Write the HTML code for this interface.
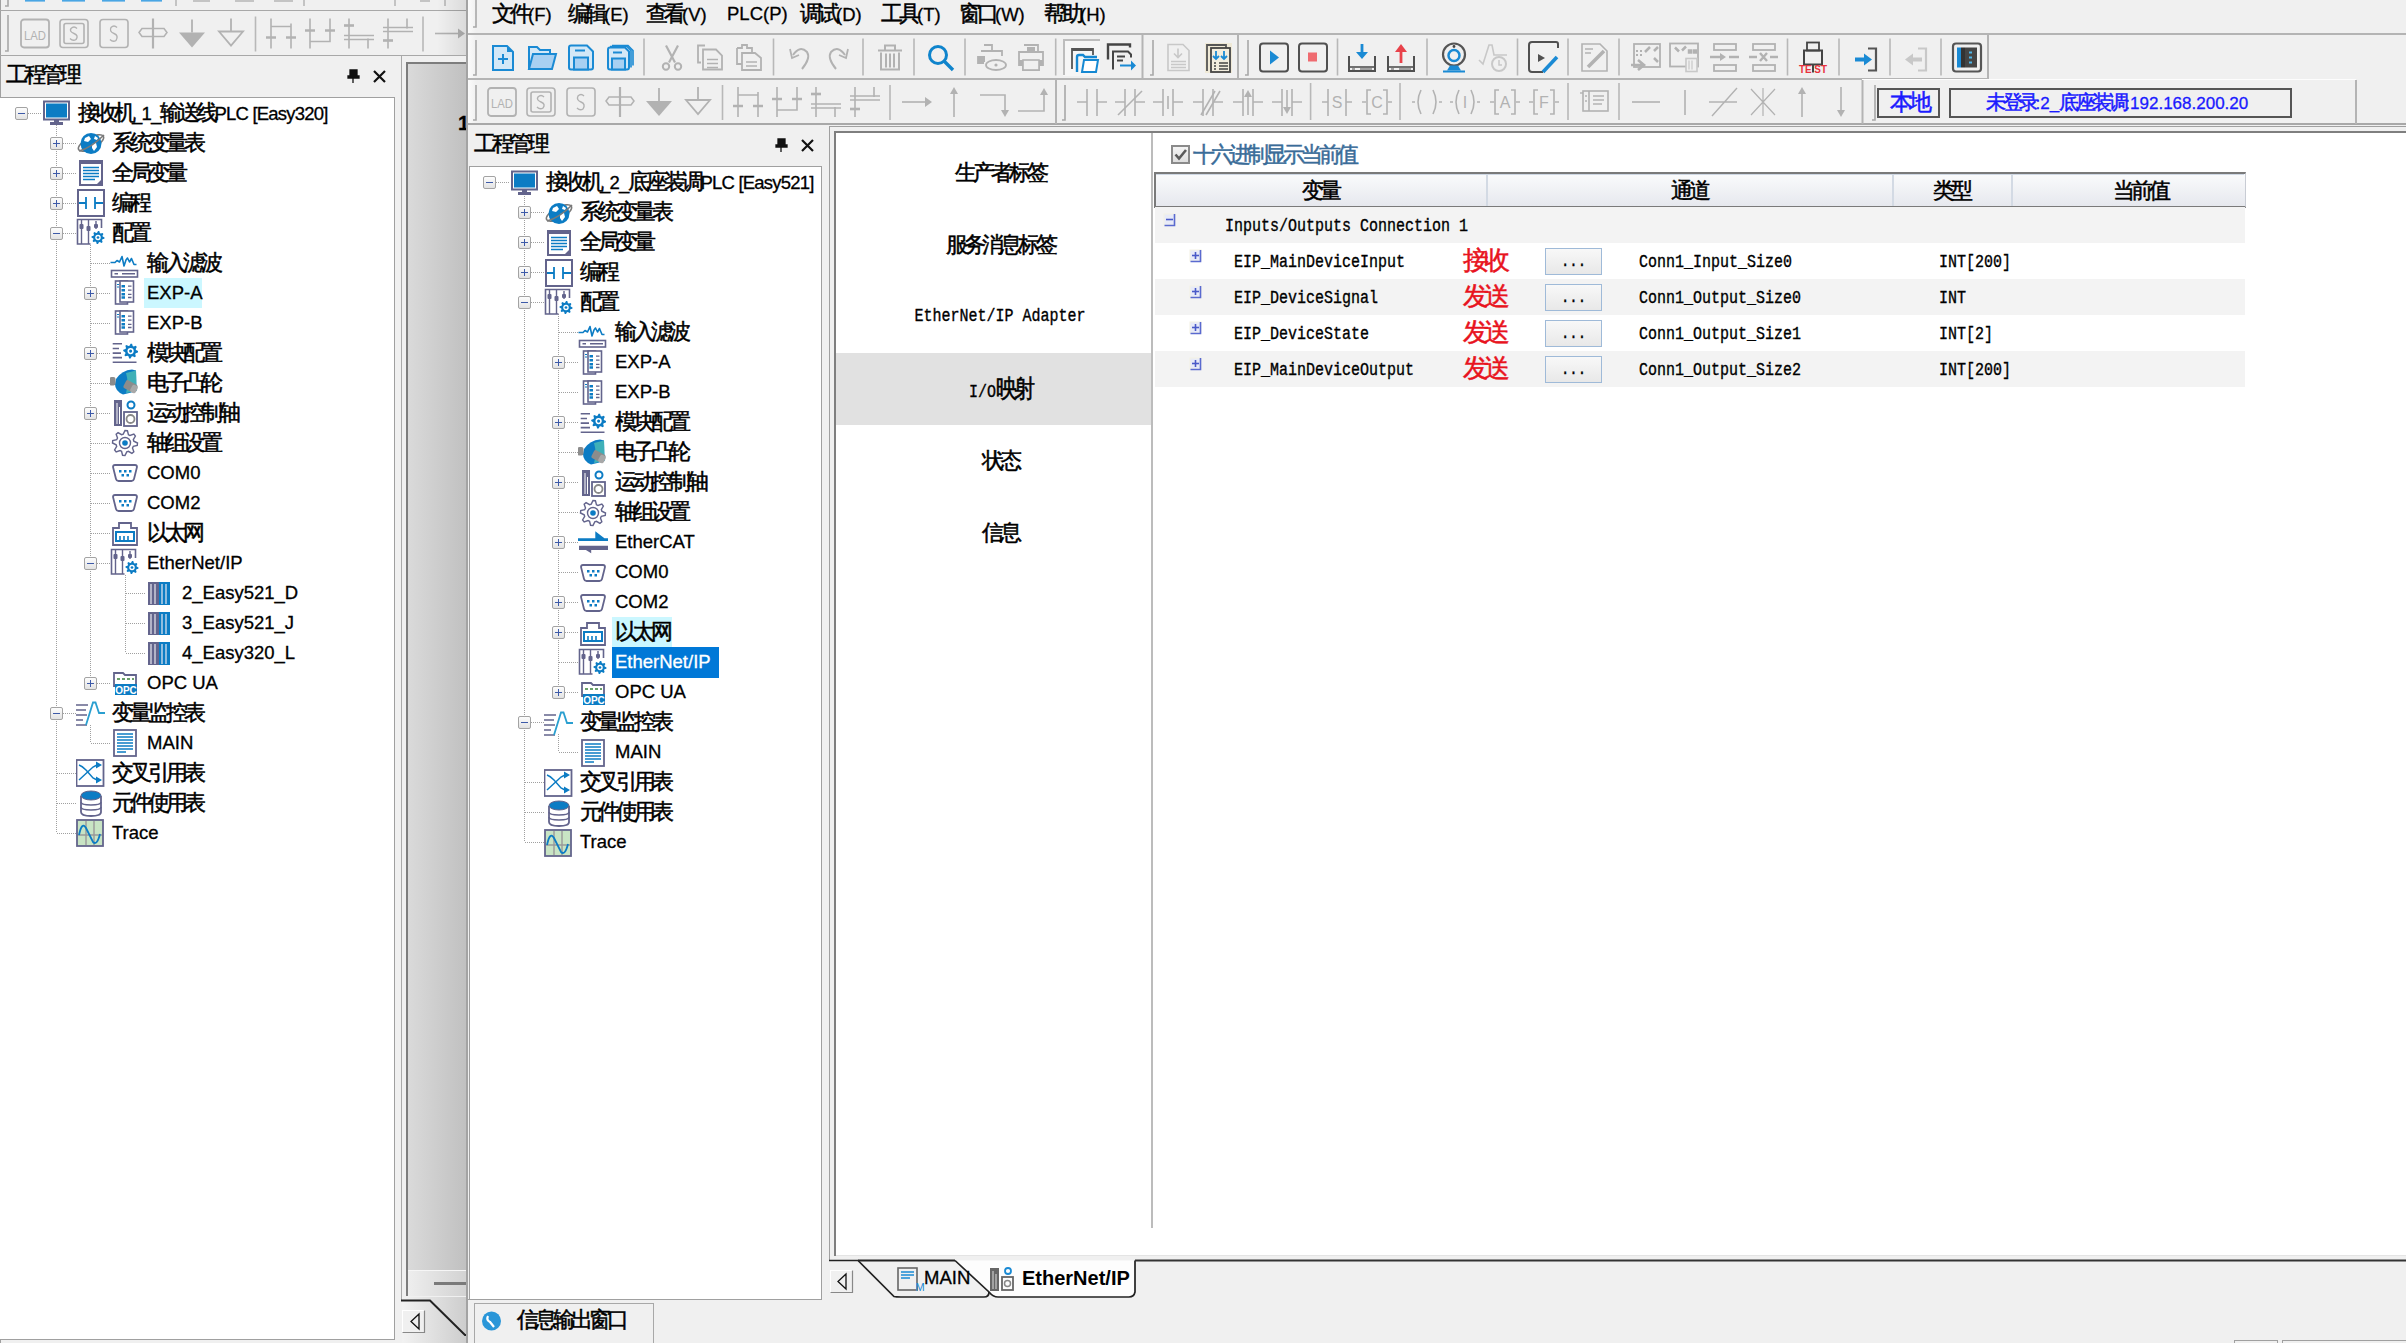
<!DOCTYPE html><html><head><meta charset="utf-8"><style>
*{box-sizing:border-box}
html,body{margin:0;padding:0}
body{width:2406px;height:1343px;overflow:hidden;background:#f0f0f0;position:relative;font-family:"Liberation Sans",sans-serif;color:#000}
.a{position:absolute}
.t{white-space:nowrap;font-size:18.5px;-webkit-text-stroke:0.3px currentColor}
.c{display:inline-block;width:0.973em;text-align:center;white-space:nowrap}
.c i{font-style:normal;font-size:1.2em;-webkit-text-stroke:0.5px currentColor}
.m{font-family:"Liberation Mono",monospace}
</style></head><body><div class="a" style="left:0px;top:0px;width:1px;height:1343px;background:#a0a0a0"></div>
<div class="a" style="left:0px;top:10px;width:467px;height:1px;background:#a8a8a8"></div>
<div class="a" style="left:0px;top:55px;width:467px;height:1px;background:#a8a8a8"></div>
<svg class="a" style="left:0;top:0" width="467" height="60"><path d="M8 15 V51 H5" fill="none" stroke="#a8a8a8" stroke-width="1.6"/><g transform="translate(20,18.5)"><rect x="1" y="1" width="28" height="28" rx="3" fill="none" stroke="#b2b2b2" stroke-width="1.8"/><text x="15" y="21" font-size="12" font-family="Liberation Sans" fill="#b2b2b2" text-anchor="middle" textLength="22" lengthAdjust="spacingAndGlyphs">LAD</text></g><g transform="translate(59,18.5)"><rect x="1" y="1" width="28" height="28" rx="3" fill="none" stroke="#b2b2b2" stroke-width="1.6"/><rect x="5" y="5" width="20" height="20" rx="2" fill="none" stroke="#b2b2b2" stroke-width="1.6"/><path d="M18 10 Q15 7 12 10 Q10 13 15 15 Q20 17 17 21 Q14 23 11 20" fill="none" stroke="#b2b2b2" stroke-width="1.4"/></g><g transform="translate(99,18.5)"><rect x="1" y="1" width="28" height="28" rx="3" fill="none" stroke="#b2b2b2" stroke-width="1.6"/><path d="M18 9 Q15 6 12 9 Q10 13 15 15 Q20 17 17 22 Q14 24 11 21" fill="none" stroke="#b2b2b2" stroke-width="1.4"/></g><g transform="translate(138,18.5)"><path d="M15 0V30" stroke="#b2b2b2" stroke-width="2.2"/><path d="M1 14 L4 10 H26 L29 14 L26 18 H4Z" fill="none" stroke="#b2b2b2" stroke-width="1.5"/></g><g transform="translate(178,18.5)"><path d="M14 1V14" stroke="#b2b2b2" stroke-width="1.8"/><path d="M1 14H27L14 29Z" fill="#b2b2b2"/></g><g transform="translate(217,18.5)"><path d="M14 0V13" stroke="#b2b2b2" stroke-width="1.8"/><path d="M2 13H26L14 27Z" fill="none" stroke="#b2b2b2" stroke-width="1.8"/></g><g transform="translate(266,18.5)"><path d="M5 0V30M25 5V30M5 8H25V30" fill="none" stroke="#b2b2b2" stroke-width="1.6"/><path d="M0 19H10M20 19H30" stroke="#b2b2b2" stroke-width="2.6"/></g><g transform="translate(305,18.5)"><path d="M5 0V30M25 0V23H5" fill="none" stroke="#b2b2b2" stroke-width="1.6"/><path d="M0 12H10M20 12H30" stroke="#b2b2b2" stroke-width="2.6"/></g><g transform="translate(344,18.5)"><path d="M5 0V30M24 20V30" fill="none" stroke="#b2b2b2" stroke-width="1.6"/><path d="M0 17H30M0 21H30" stroke="#b2b2b2" stroke-width="1.4"/><path d="M0 7H10" stroke="#b2b2b2" stroke-width="2.6"/></g><g transform="translate(383,18.5)"><path d="M5 0V30M24 0V10" fill="none" stroke="#b2b2b2" stroke-width="1.6"/><path d="M0 9H30M0 13H30" stroke="#b2b2b2" stroke-width="1.4"/><path d="M0 22H10" stroke="#b2b2b2" stroke-width="2.6"/></g><g transform="translate(435,18.5)"><path d="M0 15H27" stroke="#b2b2b2" stroke-width="1.6"/><path d="M23 10L30 15L23 20Z" fill="#b2b2b2"/></g><line x1="255.5" y1="16.5" x2="255.5" y2="51.5" stroke="#b8b8b8" stroke-width="1.6"/><line x1="423" y1="16.5" x2="423" y2="51.5" stroke="#b8b8b8" stroke-width="1.6"/><rect x="25" y="0" width="20" height="1.6" fill="#4aa6e4"/><rect x="62" y="0" width="23" height="1.6" fill="#4aa6e4"/><rect x="102" y="0" width="23" height="1.6" fill="#4aa6e4"/><rect x="141" y="0" width="21" height="1.6" fill="#4aa6e4"/><path d="M8 -4 V6 H5" fill="none" stroke="#a8a8a8" stroke-width="1.6"/><line x1="176" y1="0" x2="176" y2="6" stroke="#b8b8b8" stroke-width="1.6"/><line x1="304" y1="0" x2="304" y2="6" stroke="#b8b8b8" stroke-width="1.6"/><line x1="395" y1="0" x2="395" y2="6" stroke="#b8b8b8" stroke-width="1.6"/><line x1="445" y1="0" x2="445" y2="6" stroke="#b8b8b8" stroke-width="1.6"/><rect x="193" y="0" width="17" height="2" fill="#c4c4c4"/><rect x="235" y="0" width="19" height="2" fill="#c4c4c4"/><rect x="274" y="0" width="19" height="2" fill="#c4c4c4"/><rect x="420" y="0" width="10" height="2" fill="#c4c4c4"/></svg>
<div class="a" style="left:437px;top:0px;width:30px;height:55px;background:linear-gradient(to right,rgba(0,0,0,0),rgba(0,0,0,0.09))"></div>
<div class="a t" style="left:6px;top:56px;height:38px;line-height:38px;"><span class="c"><i>工</i></span><span class="c"><i>程</i></span><span class="c"><i>管</i></span><span class="c"><i>理</i></span></div>
<svg class="a" style="left:346px;top:67px" width="40" height="18" viewBox="0 0 40 18"><path d="M4 3H11V9H13V11H2V9H4Z M7 11V16" fill="#111" stroke="#111" stroke-width="1.3"/><path d="M28 4L39 15M39 4L28 15" stroke="#111" stroke-width="2.2"/></svg>
<div class="a" style="left:0px;top:97px;width:395px;height:1243px;background:#fff;border:1px solid #a0a0a0;border-left:none"></div>
<div class="a" style="left:56px;top:125px;width:1px;height:708px;background:repeating-linear-gradient(to bottom,#a0a0a0 0 1px,transparent 1px 2px)"></div>
<div class="a" style="left:90px;top:245px;width:1px;height:438px;background:repeating-linear-gradient(to bottom,#a0a0a0 0 1px,transparent 1px 2px)"></div>
<div class="a" style="left:125px;top:575px;width:1px;height:78px;background:repeating-linear-gradient(to bottom,#a0a0a0 0 1px,transparent 1px 2px)"></div>
<div class="a" style="left:90px;top:725px;width:1px;height:18px;background:repeating-linear-gradient(to bottom,#a0a0a0 0 1px,transparent 1px 2px)"></div>
<div class="a" style="left:22px;top:113px;width:19px;height:1px;background:repeating-linear-gradient(to right,#a0a0a0 0 1px,transparent 1px 2px)"></div>
<div class="a" style="left:15px;top:107px;width:13px;height:13px;border:1px solid #a3a3a3;border-radius:2px;background:linear-gradient(#fdfdfd,#e2e2e2)"></div>
<div class="a" style="left:18px;top:113px;width:7px;height:1.3px;background:#3d5aa8"></div>
<svg class="a" style="left:41px;top:98px;" width="30" height="30" viewBox="0 0 30 30"><rect x="3" y="3.5" width="25" height="18" fill="#fff" stroke="#63648c" stroke-width="2"/><rect x="5" y="5.5" width="21" height="14" fill="#0c7cc4"/><rect x="13" y="22" width="5" height="2.5" fill="#63648c"/><rect x="9" y="24" width="13" height="3" fill="#63648c"/></svg>
<div class="a t" style="left:78px;top:98px;height:30px;line-height:30px;letter-spacing:-0.8px"><span class="c"><i>接</i></span><span class="c"><i>收</i></span><span class="c"><i>机</i></span>_1_<span class="c"><i>输</i></span><span class="c"><i>送</i></span><span class="c"><i>线</i></span>PLC [Easy320]</div>
<div class="a" style="left:57px;top:143px;width:19px;height:1px;background:repeating-linear-gradient(to right,#a0a0a0 0 1px,transparent 1px 2px)"></div>
<div class="a" style="left:50px;top:137px;width:13px;height:13px;border:1px solid #a3a3a3;border-radius:2px;background:linear-gradient(#fdfdfd,#e2e2e2)"></div>
<div class="a" style="left:53px;top:143px;width:7px;height:1.3px;background:#3d5aa8"></div>
<div class="a" style="left:56px;top:140px;width:1.3px;height:7px;background:#3d5aa8"></div>
<svg class="a" style="left:76px;top:128px;" width="30" height="30" viewBox="0 0 30 30"><ellipse cx="15" cy="15" rx="14" ry="5.5" fill="none" stroke="#7a7a7a" stroke-width="1.6" transform="rotate(-28 15 15)"/><circle cx="15" cy="15.5" r="10.5" fill="#0c7cc4"/><path d="M9 10 L13 8 L15 11 L12 14 L8 13Z M16 16 L20 15 L21 19 L18 23 L16 20Z M19 8 L22 10 L21 12 L18 11Z" fill="#fff"/><path d="M3 23 Q15 20 28 7" fill="none" stroke="#7a7a7a" stroke-width="1.6"/></svg>
<div class="a t" style="left:112px;top:128px;height:30px;line-height:30px;"><span class="c"><i>系</i></span><span class="c"><i>统</i></span><span class="c"><i>变</i></span><span class="c"><i>量</i></span><span class="c"><i>表</i></span></div>
<div class="a" style="left:57px;top:173px;width:19px;height:1px;background:repeating-linear-gradient(to right,#a0a0a0 0 1px,transparent 1px 2px)"></div>
<div class="a" style="left:50px;top:167px;width:13px;height:13px;border:1px solid #a3a3a3;border-radius:2px;background:linear-gradient(#fdfdfd,#e2e2e2)"></div>
<div class="a" style="left:53px;top:173px;width:7px;height:1.3px;background:#3d5aa8"></div>
<div class="a" style="left:56px;top:170px;width:1.3px;height:7px;background:#3d5aa8"></div>
<svg class="a" style="left:76px;top:158px;" width="30" height="30" viewBox="0 0 30 30"><rect x="4" y="3" width="22" height="24" fill="#fff" stroke="#63648c" stroke-width="2"/><rect x="4" y="3" width="22" height="3" fill="#63648c"/><path d="M7 9.5H23M7 12.5H23M7 15.5H23M7 18.5H23M7 21.5H19" stroke="#0c7cc4" stroke-width="1.6"/><path d="M21 26 L26 21 L26 26Z" fill="#63648c"/></svg>
<div class="a t" style="left:112px;top:158px;height:30px;line-height:30px;"><span class="c"><i>全</i></span><span class="c"><i>局</i></span><span class="c"><i>变</i></span><span class="c"><i>量</i></span></div>
<div class="a" style="left:57px;top:203px;width:19px;height:1px;background:repeating-linear-gradient(to right,#a0a0a0 0 1px,transparent 1px 2px)"></div>
<div class="a" style="left:50px;top:197px;width:13px;height:13px;border:1px solid #a3a3a3;border-radius:2px;background:linear-gradient(#fdfdfd,#e2e2e2)"></div>
<div class="a" style="left:53px;top:203px;width:7px;height:1.3px;background:#3d5aa8"></div>
<div class="a" style="left:56px;top:200px;width:1.3px;height:7px;background:#3d5aa8"></div>
<svg class="a" style="left:76px;top:188px;" width="30" height="30" viewBox="0 0 30 30"><rect x="2" y="2" width="26" height="26" fill="#fff" stroke="#63648c" stroke-width="2"/><path d="M3 15H10M10 9V21M19 9V21M19 15H27" stroke="#0c7cc4" stroke-width="1.8" fill="none"/></svg>
<div class="a t" style="left:112px;top:188px;height:30px;line-height:30px;"><span class="c"><i>编</i></span><span class="c"><i>程</i></span></div>
<div class="a" style="left:57px;top:233px;width:19px;height:1px;background:repeating-linear-gradient(to right,#a0a0a0 0 1px,transparent 1px 2px)"></div>
<div class="a" style="left:50px;top:227px;width:13px;height:13px;border:1px solid #a3a3a3;border-radius:2px;background:linear-gradient(#fdfdfd,#e2e2e2)"></div>
<div class="a" style="left:53px;top:233px;width:7px;height:1.3px;background:#3d5aa8"></div>
<svg class="a" style="left:76px;top:218px;" width="30" height="30" viewBox="0 0 30 30"><path d="M14.5 26H1.5V1.5H25.5V10" fill="none" stroke="#63648c" stroke-width="1.6"/><path d="M5.5 2V26M12.5 2V26M20 3V11" stroke="#63648c" stroke-width="1.4"/><rect x="3.5" y="6" width="4" height="5" rx="1" fill="#63648c"/><rect x="10.5" y="8" width="4" height="5" rx="1" fill="#63648c"/><rect x="18" y="6" width="4" height="4" rx="1" fill="#63648c"/><path d="M28.51,19.50 L28.38,20.77 L26.46,21.35 L26.02,22.18 L26.60,24.10 L25.62,24.91 L23.85,23.96 L22.94,24.24 L22.00,26.01 L20.73,25.88 L20.15,23.96 L19.32,23.52 L17.40,24.10 L16.59,23.12 L17.54,21.35 L17.26,20.44 L15.49,19.50 L15.62,18.23 L17.54,17.65 L17.98,16.82 L17.40,14.90 L18.38,14.09 L20.15,15.04 L21.06,14.76 L22.00,12.99 L23.27,13.12 L23.85,15.04 L24.68,15.48 L26.60,14.90 L27.41,15.88 L26.46,17.65 L26.74,18.56Z" fill="#0c7cc4"/><circle cx="22" cy="19.5" r="2.7300000000000004" fill="#fff"/><circle cx="22" cy="19.5" r="1.3650000000000002" fill="#0c7cc4"/></svg>
<div class="a t" style="left:112px;top:218px;height:30px;line-height:30px;"><span class="c"><i>配</i></span><span class="c"><i>置</i></span></div>
<div class="a" style="left:91px;top:263px;width:19px;height:1px;background:repeating-linear-gradient(to right,#a0a0a0 0 1px,transparent 1px 2px)"></div>
<svg class="a" style="left:110px;top:248px;" width="30" height="30" viewBox="0 0 30 30"><polyline points="0.5,14.5 5,14.5 7,12.5 9.5,14 12,8.5 14,18 16,12 17.5,10 19.5,14 21.5,10.5 24,16.5 26.5,16.5" fill="none" stroke="#0c7cc4" stroke-width="1.6" stroke-linejoin="round"/><rect x="1.5" y="22.5" width="26" height="6.5" fill="#fff" stroke="#63648c" stroke-width="1.6"/><path d="M4.5 25.75H8M12 25.75H25" stroke="#63648c" stroke-width="1.4"/></svg>
<div class="a t" style="left:147px;top:248px;height:30px;line-height:30px;"><span class="c"><i>输</i></span><span class="c"><i>入</i></span><span class="c"><i>滤</i></span><span class="c"><i>波</i></span></div>
<div class="a" style="left:91px;top:293px;width:19px;height:1px;background:repeating-linear-gradient(to right,#a0a0a0 0 1px,transparent 1px 2px)"></div>
<div class="a" style="left:84px;top:287px;width:13px;height:13px;border:1px solid #a3a3a3;border-radius:2px;background:linear-gradient(#fdfdfd,#e2e2e2)"></div>
<div class="a" style="left:87px;top:293px;width:7px;height:1.3px;background:#3d5aa8"></div>
<div class="a" style="left:90px;top:290px;width:1.3px;height:7px;background:#3d5aa8"></div>
<svg class="a" style="left:110px;top:278px;" width="30" height="30" viewBox="0 0 30 30"><rect x="5.5" y="3" width="12" height="23" fill="#fff" stroke="#63648c" stroke-width="1.6"/><rect x="10" y="3" width="13.5" height="21" fill="#fff" stroke="#63648c" stroke-width="1.6"/><path d="M11.5 8.2H15M11.5 12.2H15M11.5 16.3H15M11.5 19.5H15" stroke="#0c7cc4" stroke-width="2.4"/><path d="M18 8.2H21.5M18 12.2H21.5M18 16.3H21.5M18 19.5H21.5" stroke="#63648c" stroke-width="1.3"/><path d="M7 6.5H9M7 9H9" stroke="#0c7cc4" stroke-width="1.2"/></svg>
<div class="a" style="left:144px;top:278px;width:58px;height:30px;background:#cbf7ff"></div>
<div class="a t" style="left:147px;top:278px;height:30px;line-height:30px;">EXP-A</div>
<div class="a" style="left:91px;top:323px;width:19px;height:1px;background:repeating-linear-gradient(to right,#a0a0a0 0 1px,transparent 1px 2px)"></div>
<svg class="a" style="left:110px;top:308px;" width="30" height="30" viewBox="0 0 30 30"><rect x="5.5" y="3" width="12" height="23" fill="#fff" stroke="#63648c" stroke-width="1.6"/><rect x="10" y="3" width="13.5" height="21" fill="#fff" stroke="#63648c" stroke-width="1.6"/><path d="M11.5 8.2H15M11.5 12.2H15M11.5 16.3H15M11.5 19.5H15" stroke="#0c7cc4" stroke-width="2.4"/><path d="M18 8.2H21.5M18 12.2H21.5M18 16.3H21.5M18 19.5H21.5" stroke="#63648c" stroke-width="1.3"/><path d="M7 6.5H9M7 9H9" stroke="#0c7cc4" stroke-width="1.2"/></svg>
<div class="a t" style="left:147px;top:308px;height:30px;line-height:30px;">EXP-B</div>
<div class="a" style="left:91px;top:353px;width:19px;height:1px;background:repeating-linear-gradient(to right,#a0a0a0 0 1px,transparent 1px 2px)"></div>
<div class="a" style="left:84px;top:347px;width:13px;height:13px;border:1px solid #a3a3a3;border-radius:2px;background:linear-gradient(#fdfdfd,#e2e2e2)"></div>
<div class="a" style="left:87px;top:353px;width:7px;height:1.3px;background:#3d5aa8"></div>
<div class="a" style="left:90px;top:350px;width:1.3px;height:7px;background:#3d5aa8"></div>
<svg class="a" style="left:110px;top:338px;" width="30" height="30" viewBox="0 0 30 30"><path d="M2.7 5.7H12M2.7 10.5H9M2.7 15.1H11M2.7 19.6H12M2.7 24.2H26.5" stroke="#63648c" stroke-width="1.6"/><path d="M28.04,13.10 L27.90,14.55 L25.70,15.21 L25.19,16.17 L25.86,18.36 L24.73,19.29 L22.71,18.20 L21.68,18.51 L20.60,20.54 L19.15,20.40 L18.49,18.20 L17.53,17.69 L15.34,18.36 L14.41,17.23 L15.50,15.21 L15.19,14.18 L13.16,13.10 L13.30,11.65 L15.50,10.99 L16.01,10.03 L15.34,7.84 L16.47,6.91 L18.49,8.00 L19.52,7.69 L20.60,5.66 L22.05,5.80 L22.71,8.00 L23.67,8.51 L25.86,7.84 L26.79,8.97 L25.70,10.99 L26.01,12.02Z" fill="#0c7cc4"/><circle cx="20.6" cy="13.1" r="3.12" fill="#fff"/><circle cx="20.6" cy="13.1" r="1.56" fill="#0c7cc4"/></svg>
<div class="a t" style="left:147px;top:338px;height:30px;line-height:30px;"><span class="c"><i>模</i></span><span class="c"><i>块</i></span><span class="c"><i>配</i></span><span class="c"><i>置</i></span></div>
<div class="a" style="left:91px;top:383px;width:19px;height:1px;background:repeating-linear-gradient(to right,#a0a0a0 0 1px,transparent 1px 2px)"></div>
<svg class="a" style="left:110px;top:368px;" width="30" height="30" viewBox="0 0 30 30"><path d="M6 11 Q12 2 22 1.5 L26 2.5 L26.5 23 Q19 25 13 26.5 Q5 23 5 16Z" fill="#0c7cc4"/><path d="M16 5 L26 2.5 L26.5 23 L16 25 Q19 15 16 5Z" fill="#3fb0b8"/><rect x="14" y="14" width="13" height="9" rx="2" fill="#8c8c8c" transform="rotate(28 20.5 18.5)"/><rect x="21" y="17" width="6" height="8" rx="2" fill="#a8a8a8" transform="rotate(28 24 21)"/><rect x="-0.5" y="9" width="6" height="8.5" rx="2" fill="#8c8c8c"/></svg>
<div class="a t" style="left:147px;top:368px;height:30px;line-height:30px;"><span class="c"><i>电</i></span><span class="c"><i>子</i></span><span class="c"><i>凸</i></span><span class="c"><i>轮</i></span></div>
<div class="a" style="left:91px;top:413px;width:19px;height:1px;background:repeating-linear-gradient(to right,#a0a0a0 0 1px,transparent 1px 2px)"></div>
<div class="a" style="left:84px;top:407px;width:13px;height:13px;border:1px solid #a3a3a3;border-radius:2px;background:linear-gradient(#fdfdfd,#e2e2e2)"></div>
<div class="a" style="left:87px;top:413px;width:7px;height:1.3px;background:#3d5aa8"></div>
<div class="a" style="left:90px;top:410px;width:1.3px;height:7px;background:#3d5aa8"></div>
<svg class="a" style="left:110px;top:398px;" width="30" height="30" viewBox="0 0 30 30"><rect x="4" y="2" width="8" height="26" fill="#63648c"/><path d="M7 5V26M9.5 9V26" stroke="#fff" stroke-width="1"/><circle cx="21" cy="7" r="3.5" fill="#fff" stroke="#0c7cc4" stroke-width="2"/><rect x="14" y="14" width="13" height="14" fill="#fff" stroke="#63648c" stroke-width="1.8"/><circle cx="20.5" cy="21" r="4" fill="none" stroke="#888" stroke-width="1.8"/></svg>
<div class="a t" style="left:147px;top:398px;height:30px;line-height:30px;"><span class="c"><i>运</i></span><span class="c"><i>动</i></span><span class="c"><i>控</i></span><span class="c"><i>制</i></span><span class="c"><i>轴</i></span></div>
<div class="a" style="left:91px;top:443px;width:19px;height:1px;background:repeating-linear-gradient(to right,#a0a0a0 0 1px,transparent 1px 2px)"></div>
<svg class="a" style="left:110px;top:428px;" width="30" height="30" viewBox="0 0 30 30"><path d="M27.50,15.00 L27.26,17.44 L23.31,18.44 L22.48,20.00 L23.84,23.84 L21.94,25.39 L18.44,23.31 L16.76,23.83 L15.00,27.50 L12.56,27.26 L11.56,23.31 L10.00,22.48 L6.16,23.84 L4.61,21.94 L6.69,18.44 L6.17,16.76 L2.50,15.00 L2.74,12.56 L6.69,11.56 L7.52,10.00 L6.16,6.16 L8.06,4.61 L11.56,6.69 L13.24,6.17 L15.00,2.50 L17.44,2.74 L18.44,6.69 L20.00,7.52 L23.84,6.16 L25.39,8.06 L23.31,11.56 L23.83,13.24Z" fill="#fff" stroke="#63648c" stroke-width="1.4"/><circle cx="15" cy="15" r="5.5" fill="#fff" stroke="#63648c" stroke-width="1.4"/><circle cx="15" cy="15" r="2.8" fill="#0c7cc4"/></svg>
<div class="a t" style="left:147px;top:428px;height:30px;line-height:30px;"><span class="c"><i>轴</i></span><span class="c"><i>组</i></span><span class="c"><i>设</i></span><span class="c"><i>置</i></span></div>
<div class="a" style="left:91px;top:473px;width:19px;height:1px;background:repeating-linear-gradient(to right,#a0a0a0 0 1px,transparent 1px 2px)"></div>
<svg class="a" style="left:110px;top:458px;" width="30" height="30" viewBox="0 0 30 30"><path d="M3 9 Q3 7 5 7 H25 Q27 7 27 9 L24 21 Q23.5 23 21.5 23 H8.5 Q6.5 23 6 21Z" fill="#fff" stroke="#63648c" stroke-width="1.8"/><path d="M9 12h2.5v2.5h-2.5zM14 12h2.5v2.5h-2.5zM19 12h2.5v2.5h-2.5zM11.5 16h2.5v2.5h-2.5zM16.5 16h2.5v2.5h-2.5z" fill="#0c7cc4"/></svg>
<div class="a t" style="left:147px;top:458px;height:30px;line-height:30px;">COM0</div>
<div class="a" style="left:91px;top:503px;width:19px;height:1px;background:repeating-linear-gradient(to right,#a0a0a0 0 1px,transparent 1px 2px)"></div>
<svg class="a" style="left:110px;top:488px;" width="30" height="30" viewBox="0 0 30 30"><path d="M3 9 Q3 7 5 7 H25 Q27 7 27 9 L24 21 Q23.5 23 21.5 23 H8.5 Q6.5 23 6 21Z" fill="#fff" stroke="#63648c" stroke-width="1.8"/><path d="M9 12h2.5v2.5h-2.5zM14 12h2.5v2.5h-2.5zM19 12h2.5v2.5h-2.5zM11.5 16h2.5v2.5h-2.5zM16.5 16h2.5v2.5h-2.5z" fill="#0c7cc4"/></svg>
<div class="a t" style="left:147px;top:488px;height:30px;line-height:30px;">COM2</div>
<div class="a" style="left:91px;top:533px;width:19px;height:1px;background:repeating-linear-gradient(to right,#a0a0a0 0 1px,transparent 1px 2px)"></div>
<svg class="a" style="left:110px;top:518px;" width="30" height="30" viewBox="0 0 30 30"><path d="M9 10V5H21V10H27V27H3V10Z" fill="#fff" stroke="#63648c" stroke-width="1.8"/><rect x="6" y="14" width="18" height="9" fill="none" stroke="#0c7cc4" stroke-width="2"/><path d="M10 18V23M14 18V23M18 18V23" stroke="#0c7cc4" stroke-width="1.6"/></svg>
<div class="a t" style="left:147px;top:518px;height:30px;line-height:30px;"><span class="c"><i>以</i></span><span class="c"><i>太</i></span><span class="c"><i>网</i></span></div>
<div class="a" style="left:91px;top:563px;width:19px;height:1px;background:repeating-linear-gradient(to right,#a0a0a0 0 1px,transparent 1px 2px)"></div>
<div class="a" style="left:84px;top:557px;width:13px;height:13px;border:1px solid #a3a3a3;border-radius:2px;background:linear-gradient(#fdfdfd,#e2e2e2)"></div>
<div class="a" style="left:87px;top:563px;width:7px;height:1.3px;background:#3d5aa8"></div>
<svg class="a" style="left:110px;top:548px;" width="30" height="30" viewBox="0 0 30 30"><path d="M14.5 26H1.5V1.5H25.5V10" fill="none" stroke="#63648c" stroke-width="1.6"/><path d="M5.5 2V26M12.5 2V26M20 3V11" stroke="#63648c" stroke-width="1.4"/><rect x="3.5" y="6" width="4" height="5" rx="1" fill="#63648c"/><rect x="10.5" y="8" width="4" height="5" rx="1" fill="#63648c"/><rect x="18" y="6" width="4" height="4" rx="1" fill="#63648c"/><path d="M28.51,19.50 L28.38,20.77 L26.46,21.35 L26.02,22.18 L26.60,24.10 L25.62,24.91 L23.85,23.96 L22.94,24.24 L22.00,26.01 L20.73,25.88 L20.15,23.96 L19.32,23.52 L17.40,24.10 L16.59,23.12 L17.54,21.35 L17.26,20.44 L15.49,19.50 L15.62,18.23 L17.54,17.65 L17.98,16.82 L17.40,14.90 L18.38,14.09 L20.15,15.04 L21.06,14.76 L22.00,12.99 L23.27,13.12 L23.85,15.04 L24.68,15.48 L26.60,14.90 L27.41,15.88 L26.46,17.65 L26.74,18.56Z" fill="#0c7cc4"/><circle cx="22" cy="19.5" r="2.7300000000000004" fill="#fff"/><circle cx="22" cy="19.5" r="1.3650000000000002" fill="#0c7cc4"/></svg>
<div class="a t" style="left:147px;top:548px;height:30px;line-height:30px;">EtherNet/IP</div>
<div class="a" style="left:126px;top:593px;width:19px;height:1px;background:repeating-linear-gradient(to right,#a0a0a0 0 1px,transparent 1px 2px)"></div>
<svg class="a" style="left:144px;top:578px;" width="30" height="30" viewBox="0 0 30 30"><rect x="4" y="4" width="22" height="23" fill="#63648c"/><rect x="15" y="4" width="11" height="23" fill="#0c7cc4"/><path d="M7 6V26M11 6V26M18 6V26M22 6V26" stroke="#e8e8f0" stroke-width="1.2"/></svg>
<div class="a t" style="left:182px;top:578px;height:30px;line-height:30px;">2_Easy521_D</div>
<div class="a" style="left:126px;top:623px;width:19px;height:1px;background:repeating-linear-gradient(to right,#a0a0a0 0 1px,transparent 1px 2px)"></div>
<svg class="a" style="left:144px;top:608px;" width="30" height="30" viewBox="0 0 30 30"><rect x="4" y="4" width="22" height="23" fill="#63648c"/><rect x="15" y="4" width="11" height="23" fill="#0c7cc4"/><path d="M7 6V26M11 6V26M18 6V26M22 6V26" stroke="#e8e8f0" stroke-width="1.2"/></svg>
<div class="a t" style="left:182px;top:608px;height:30px;line-height:30px;">3_Easy521_J</div>
<div class="a" style="left:126px;top:653px;width:19px;height:1px;background:repeating-linear-gradient(to right,#a0a0a0 0 1px,transparent 1px 2px)"></div>
<svg class="a" style="left:144px;top:638px;" width="30" height="30" viewBox="0 0 30 30"><rect x="4" y="4" width="22" height="23" fill="#63648c"/><rect x="15" y="4" width="11" height="23" fill="#0c7cc4"/><path d="M7 6V26M11 6V26M18 6V26M22 6V26" stroke="#e8e8f0" stroke-width="1.2"/></svg>
<div class="a t" style="left:182px;top:638px;height:30px;line-height:30px;">4_Easy320_L</div>
<div class="a" style="left:91px;top:683px;width:19px;height:1px;background:repeating-linear-gradient(to right,#a0a0a0 0 1px,transparent 1px 2px)"></div>
<div class="a" style="left:84px;top:677px;width:13px;height:13px;border:1px solid #a3a3a3;border-radius:2px;background:linear-gradient(#fdfdfd,#e2e2e2)"></div>
<div class="a" style="left:87px;top:683px;width:7px;height:1.3px;background:#3d5aa8"></div>
<div class="a" style="left:90px;top:680px;width:1.3px;height:7px;background:#3d5aa8"></div>
<svg class="a" style="left:110px;top:668px;" width="30" height="30" viewBox="0 0 30 30"><path d="M4 5H13L15 7H26V18H4Z" fill="#fff" stroke="#63648c" stroke-width="1.8"/><path d="M7 10h3v2h-3zM12 10h3v2h-3zM17 10h3v2h-3zM22 10h2v2h-2z" fill="#6aa06a"/><rect x="5" y="16" width="22" height="11" fill="#0c7cc4"/><text x="16" y="26" font-size="10" font-family="Liberation Sans" font-weight="bold" fill="#fff" text-anchor="middle">OPC</text></svg>
<div class="a t" style="left:147px;top:668px;height:30px;line-height:30px;">OPC UA</div>
<div class="a" style="left:57px;top:713px;width:19px;height:1px;background:repeating-linear-gradient(to right,#a0a0a0 0 1px,transparent 1px 2px)"></div>
<div class="a" style="left:50px;top:707px;width:13px;height:13px;border:1px solid #a3a3a3;border-radius:2px;background:linear-gradient(#fdfdfd,#e2e2e2)"></div>
<div class="a" style="left:53px;top:713px;width:7px;height:1.3px;background:#3d5aa8"></div>
<svg class="a" style="left:76px;top:698px;" width="30" height="30" viewBox="0 0 30 30"><path d="M0 7H12M0 12H10M0 17H11M0 22H7M0 27H11" stroke="#63648c" stroke-width="1.6"/><polyline points="10,27 17,4.5 19.5,4.5 23,15 29,15" fill="none" stroke="#2a9fd0" stroke-width="1.8"/></svg>
<div class="a t" style="left:112px;top:698px;height:30px;line-height:30px;"><span class="c"><i>变</i></span><span class="c"><i>量</i></span><span class="c"><i>监</i></span><span class="c"><i>控</i></span><span class="c"><i>表</i></span></div>
<div class="a" style="left:91px;top:743px;width:19px;height:1px;background:repeating-linear-gradient(to right,#a0a0a0 0 1px,transparent 1px 2px)"></div>
<svg class="a" style="left:110px;top:728px;" width="30" height="30" viewBox="0 0 30 30"><rect x="4" y="2" width="22" height="26" fill="#fff" stroke="#63648c" stroke-width="1.8"/><path d="M7 6H23M7 9H23M7 12H23M7 15H23M7 18H23M7 21H23M7 24H16" stroke="#0c7cc4" stroke-width="1.5"/></svg>
<div class="a t" style="left:147px;top:728px;height:30px;line-height:30px;">MAIN</div>
<div class="a" style="left:57px;top:773px;width:19px;height:1px;background:repeating-linear-gradient(to right,#a0a0a0 0 1px,transparent 1px 2px)"></div>
<svg class="a" style="left:76px;top:758px;" width="30" height="30" viewBox="0 0 30 30"><rect x="0.5" y="2" width="27" height="26" fill="#fff" stroke="#63648c" stroke-width="1.8"/><path d="M3 7 Q6 8 10 12 L17 20 L21 22M3 22 L17 9 L21 7" fill="none" stroke="#0c7cc4" stroke-width="1.5"/><path d="M20 3.5L26 7L20 10.5ZM20 18.5L26 22L20 25.5Z" fill="#0c7cc4"/></svg>
<div class="a t" style="left:112px;top:758px;height:30px;line-height:30px;"><span class="c"><i>交</i></span><span class="c"><i>叉</i></span><span class="c"><i>引</i></span><span class="c"><i>用</i></span><span class="c"><i>表</i></span></div>
<div class="a" style="left:57px;top:803px;width:19px;height:1px;background:repeating-linear-gradient(to right,#a0a0a0 0 1px,transparent 1px 2px)"></div>
<svg class="a" style="left:76px;top:788px;" width="30" height="30" viewBox="0 0 30 30"><path d="M5 8 V24 Q5 28 15 28 Q25 28 25 24 V8" fill="#fff" stroke="#63648c" stroke-width="1.8"/><path d="M5 14 Q5 17 15 17 Q25 17 25 14M5 19 Q5 22 15 22 Q25 22 25 19" fill="none" stroke="#63648c" stroke-width="1.6"/><ellipse cx="15" cy="7.5" rx="10" ry="4.5" fill="#0c7cc4" stroke="#63648c" stroke-width="1"/></svg>
<div class="a t" style="left:112px;top:788px;height:30px;line-height:30px;"><span class="c"><i>元</i></span><span class="c"><i>件</i></span><span class="c"><i>使</i></span><span class="c"><i>用</i></span><span class="c"><i>表</i></span></div>
<div class="a" style="left:57px;top:833px;width:19px;height:1px;background:repeating-linear-gradient(to right,#a0a0a0 0 1px,transparent 1px 2px)"></div>
<svg class="a" style="left:76px;top:818px;" width="30" height="30" viewBox="0 0 30 30"><rect x="1" y="2" width="26" height="26" fill="#c8e4c4" stroke="#63648c" stroke-width="1.8"/><path d="M2 17H26M10 3V27M18 3V27" stroke="#999" stroke-width="1.4"/><path d="M3 17 Q6 3 10 10 Q14 18 17 24 Q21 28 24 16" fill="none" stroke="#0c7cc4" stroke-width="1.8"/></svg>
<div class="a t" style="left:112px;top:818px;height:30px;line-height:30px;">Trace</div>
<div class="a" style="left:401px;top:56px;width:1px;height:1244px;background:#a9a9a9"></div>
<div class="a" style="left:406px;top:62px;width:61px;height:1234px;background:linear-gradient(to right,#dadada,#c0c0c0);border-left:2px solid #7d7d7d;border-top:2px solid #7d7d7d"></div>
<div class="a" style="left:408px;top:1270px;width:59px;height:26px;background:linear-gradient(to right,#eeeeee,#d2d2d2);border-top:1px solid #f6f6f6"></div>
<div class="a" style="left:434px;top:1282px;width:33px;height:3px;background:#7a7a7a"></div>
<div class="a t" style="left:458px;top:108px;height:30px;line-height:30px;font-size:20px;font-weight:bold">1</div>
<div class="a" style="left:402px;top:1297px;width:64px;height:46px;background:linear-gradient(to right,#f2f2f2,#cdcdcd)"></div>
<svg class="a" style="left:395px;top:1296px" width="72" height="47"><path d="M6 4.5H35L70 39H72" fill="none" stroke="#222" stroke-width="2"/><rect x="7.5" y="14.5" width="22" height="22" fill="#f0f0f0" stroke="#fff"/><path d="M29.5 14.5V36.5H7.5" fill="none" stroke="#888" stroke-width="1.2"/><path d="M24 18L16 25.5L24 33Z" fill="none" stroke="#111" stroke-width="1.3"/></svg>
<div class="a" style="left:466px;top:0px;width:2px;height:1343px;background:#a3a3a3"></div>
<div class="a" style="left:468px;top:0px;width:1938px;height:1343px;background:#f0f0f0"></div>
<div class="a" style="left:468px;top:0px;width:8px;height:124px;background:linear-gradient(to right,#fbfbfb,#f0f0f0)"></div>
<div class="a t" style="left:492px;top:0px;height:28px;line-height:28px;"><span class="c"><i>文</i></span><span class="c"><i>件</i></span>(F)</div>
<div class="a t" style="left:568px;top:0px;height:28px;line-height:28px;"><span class="c"><i>编</i></span><span class="c"><i>辑</i></span>(E)</div>
<div class="a t" style="left:646px;top:0px;height:28px;line-height:28px;"><span class="c"><i>查</i></span><span class="c"><i>看</i></span>(V)</div>
<div class="a t" style="left:727px;top:0px;height:28px;line-height:28px;">PLC(P)</div>
<div class="a t" style="left:800px;top:0px;height:28px;line-height:28px;"><span class="c"><i>调</i></span><span class="c"><i>试</i></span>(D)</div>
<div class="a t" style="left:881px;top:0px;height:28px;line-height:28px;"><span class="c"><i>工</i></span><span class="c"><i>具</i></span>(T)</div>
<div class="a t" style="left:959px;top:0px;height:28px;line-height:28px;"><span class="c"><i>窗</i></span><span class="c"><i>口</i></span>(W)</div>
<div class="a t" style="left:1044px;top:0px;height:28px;line-height:28px;"><span class="c"><i>帮</i></span><span class="c"><i>助</i></span>(H)</div>
<div class="a" style="left:468px;top:33px;width:1938px;height:2px;background:#b4b4b4"></div>
<div class="a" style="left:468px;top:78px;width:1520px;height:2px;background:#b4b4b4"></div>
<div class="a" style="left:1862px;top:79px;width:494px;height:1px;background:#fdfdfd"></div>
<div class="a" style="left:468px;top:123px;width:1938px;height:2px;background:#a8a8a8"></div>
<svg class="a" style="left:0;top:0" width="2406" height="130"><path d="M476 0 V27 H473" fill="none" stroke="#a8a8a8" stroke-width="1.6"/><path d="M476 40 V75 H473" fill="none" stroke="#a8a8a8" stroke-width="1.6"/><path d="M476 85 V120 H473" fill="none" stroke="#a8a8a8" stroke-width="1.6"/><path d="M1153 40 V75 H1150" fill="none" stroke="#a8a8a8" stroke-width="1.6"/><path d="M1248 40 V75 H1245" fill="none" stroke="#a8a8a8" stroke-width="1.6"/><path d="M1065 85 V120 H1062" fill="none" stroke="#a8a8a8" stroke-width="1.6"/><path d="M1875 85 V120 H1872" fill="none" stroke="#a8a8a8" stroke-width="1.6"/><line x1="1142.5" y1="34" x2="1142.5" y2="79" stroke="#b4b4b4" stroke-width="2"/><line x1="1238" y1="34" x2="1238" y2="79" stroke="#b4b4b4" stroke-width="2"/><line x1="1988" y1="34" x2="1988" y2="79" stroke="#b4b4b4" stroke-width="2"/><line x1="1056" y1="80" x2="1056" y2="124" stroke="#b4b4b4" stroke-width="2"/><line x1="1862.5" y1="80" x2="1862.5" y2="124" stroke="#b4b4b4" stroke-width="2"/><line x1="2356" y1="80" x2="2356" y2="124" stroke="#b4b4b4" stroke-width="2"/><g transform="translate(492,45.0)"><path d="M1 1H15L21 7V25H1Z" fill="#d3e8f7" stroke="#1a8ad4" stroke-width="2"/><path d="M15 1V7H21Z" fill="#1a8ad4"/><path d="M11 9V19M6 14H16" stroke="#1a8ad4" stroke-width="2"/></g><g transform="translate(528,45.0)"><path d="M1 24V2H9L12 5H22V9" fill="#d3e8f7" stroke="#1a8ad4" stroke-width="2"/><path d="M1 24L5 9H28L24 24Z" fill="#a8d0f2" stroke="#1a8ad4" stroke-width="2"/></g><g transform="translate(568,44.5)"><path d="M1 3Q1 1 3 1H19L25 7V23Q25 25 23 25H3Q1 25 1 23Z" fill="#d3e8f7" stroke="#1a8ad4" stroke-width="2"/><path d="M7 6H17" stroke="#1a8ad4" stroke-width="2"/><rect x="6" y="13" width="14" height="12" fill="#a8d0f2" stroke="#1a8ad4" stroke-width="2"/></g><g transform="translate(607,44.5)"><path d="M5 1H21L26 6V21" fill="none" stroke="#1a8ad4" stroke-width="1.6"/><path d="M3 2H20L24 6V23" fill="none" stroke="#1a8ad4" stroke-width="1.6"/><path d="M1 5Q1 3 3 3H18L22 7V23Q22 25 20 25H3Q1 25 1 23Z" fill="#d3e8f7" stroke="#1a8ad4" stroke-width="2"/><path d="M6 8H15" stroke="#1a8ad4" stroke-width="2"/><rect x="5" y="14" width="13" height="11" fill="#a8d0f2" stroke="#1a8ad4" stroke-width="2"/></g><g transform="translate(661,44.5)"><path d="M5 1L14 18M17 1L8 18" stroke="#b2b2b2" stroke-width="2.2"/><circle cx="5" cy="22" r="3.2" fill="none" stroke="#b2b2b2" stroke-width="2"/><circle cx="17" cy="22" r="3.2" fill="none" stroke="#b2b2b2" stroke-width="2"/></g><g transform="translate(697,44.5)"><path d="M8 1H1V18H4" fill="none" stroke="#b2b2b2" stroke-width="1.8"/><path d="M6 5H19L25 11V25H6Z" fill="#f0f0f0" stroke="#b2b2b2" stroke-width="1.8"/><path d="M10 15H21M10 19H21M10 23H21" stroke="#b2b2b2" stroke-width="1.6"/></g><g transform="translate(736,44.0)"><path d="M1 4H6V1H11V4H16V9" fill="none" stroke="#b2b2b2" stroke-width="1.8"/><path d="M1 4V20H6" fill="none" stroke="#b2b2b2" stroke-width="1.8"/><path d="M6 9H19L25 14V26H6Z" fill="#f0f0f0" stroke="#b2b2b2" stroke-width="1.8"/><path d="M10 18H21M10 22H21" stroke="#b2b2b2" stroke-width="1.6"/></g><g transform="translate(790,45.0)"><path d="M3 10 Q10 0 17 7 Q21 13 12 24" fill="none" stroke="#b2b2b2" stroke-width="2"/><path d="M0 4L2 13L9 10" fill="none" stroke="#b2b2b2" stroke-width="1.8"/></g><g transform="translate(828,45.0)"><path d="M17 10 Q10 0 3 7 Q-1 13 8 24" fill="none" stroke="#b2b2b2" stroke-width="2"/><path d="M20 4L18 13L11 10" fill="none" stroke="#b2b2b2" stroke-width="1.8"/></g><g transform="translate(878,44.5)"><path d="M0 6H24M7 6V1H17V6" fill="none" stroke="#b2b2b2" stroke-width="2"/><path d="M3 8V25H21V8M8 9V23M12 9V23M16 9V23" fill="none" stroke="#b2b2b2" stroke-width="2"/></g><g transform="translate(927,44.0)"><circle cx="11" cy="11" r="8.5" fill="none" stroke="#0f84cc" stroke-width="3"/><path d="M17 17L26 26" stroke="#0f84cc" stroke-width="3.4"/></g><g transform="translate(977,44.0)"><path d="M7 1H15V7M4 7H25V12M1 12V19H7" fill="none" stroke="#b2b2b2" stroke-width="1.8"/><rect x="1" y="12" width="7" height="6" fill="#b2b2b2"/><ellipse cx="19" cy="21" rx="10" ry="5" fill="none" stroke="#b2b2b2" stroke-width="1.8"/><circle cx="19" cy="21" r="1.6" fill="#b2b2b2"/></g><g transform="translate(1018,44.0)"><path d="M6 1H20V7" fill="none" stroke="#b2b2b2" stroke-width="1.8"/><rect x="9" y="3" width="8" height="5" fill="#b2b2b2"/><path d="M1 8H25V21H21V26H5V21H1Z" fill="none" stroke="#b2b2b2" stroke-width="1.8"/><rect x="1" y="16" width="5" height="5" fill="#b2b2b2"/><rect x="20" y="16" width="5" height="5" fill="#b2b2b2"/><rect x="5" y="16" width="16" height="10" fill="#f0f0f0" stroke="#b2b2b2" stroke-width="1.6"/></g><g transform="translate(1167,43.5)"><path d="M1 1H16L22 7V27H1Z" fill="none" stroke="#c8c8c8" stroke-width="1.6"/><path d="M11 5V14M7 10L11 14L15 10" fill="none" stroke="#c8c8c8" stroke-width="1.6"/><path d="M4 18H19M4 21H19M4 24H19" stroke="#c8c8c8" stroke-width="1.4"/></g><g transform="translate(1259,42.5)"><rect x="1" y="1" width="28" height="28" rx="3" fill="none" stroke="#505050" stroke-width="2"/><path d="M11 8L20 15L11 22Z" fill="#1a8ad4"/></g><g transform="translate(1298,42.5)"><rect x="1" y="1" width="28" height="28" rx="3" fill="none" stroke="#505050" stroke-width="2"/><rect x="10" y="10" width="9" height="9" fill="#ef6b70"/></g><g transform="translate(1348,43.0)"><path d="M14 1V14" stroke="#1a8ad4" stroke-width="2.8"/><path d="M8 9L14 16L20 9Z" fill="#1a8ad4"/><path d="M1 13V28H27V13" fill="none" stroke="#505050" stroke-width="2"/><path d="M1 24H27" stroke="#505050" stroke-width="1.6"/><path d="M4 26H7M12 26H24" stroke="#505050" stroke-width="1.2"/></g><g transform="translate(1387,43.0)"><path d="M14 6V20" stroke="#e8424a" stroke-width="2.8"/><path d="M8 9L14 1L20 9Z" fill="#e8424a"/><path d="M1 13V28H27V13" fill="none" stroke="#505050" stroke-width="2"/><path d="M1 24H27" stroke="#505050" stroke-width="1.6"/><path d="M4 26H7M12 26H24" stroke="#505050" stroke-width="1.2"/></g><g transform="translate(1441,42.5)"><circle cx="13" cy="12" r="11" fill="none" stroke="#555" stroke-width="2.2"/><circle cx="13" cy="13" r="5.5" fill="none" stroke="#1a8ad4" stroke-width="2.5"/><circle cx="13" cy="4" r="1.4" fill="#444"/><path d="M6 28L9 23H17L20 28Z" fill="#1a8ad4"/><path d="M2 29H24" stroke="#1a8ad4" stroke-width="2"/></g><g transform="translate(1479,43.0)"><polyline points="0,17 4,21 10,2 13,2 15,12 28,12" fill="none" stroke="#c8c8c8" stroke-width="1.6"/><circle cx="20" cy="21" r="7" fill="#f0f0f0" stroke="#c8c8c8" stroke-width="2"/><path d="M20 17V22H23" fill="none" stroke="#c8c8c8" stroke-width="1.5"/></g><g transform="translate(1528,42.0)"><path d="M30 6V2Q30 0 28 0H4Q1 0 1 3V27Q1 30 4 30H15" fill="none" stroke="#505050" stroke-width="2"/><path d="M10 12L17 16L10 20Z" fill="#505050"/><path d="M15 30L29 15" stroke="#1a8ad4" stroke-width="3.6"/></g><g transform="translate(1581,43.0)"><path d="M1 1H19L26 8V28H1Z" fill="none" stroke="#b2b2b2" stroke-width="1.6"/><path d="M4 6H12M4 10H10" stroke="#b2b2b2" stroke-width="1.6"/><path d="M7 24L23 8" stroke="#b2b2b2" stroke-width="3.6"/></g><g transform="translate(1631,43.0)"><rect x="3" y="1" width="26" height="23" fill="none" stroke="#b2b2b2" stroke-width="1.8"/><path d="M5 7h2v2h-2zM9 7h2v2h-2zM5 11h2v2h-2zM9 11h2v2h-2z" fill="#b2b2b2"/><path d="M14 9L19 4M23 8L27 4M23 15L27 19" stroke="#b2b2b2" stroke-width="2.5"/><path d="M0 22H12M7 17L13 22L7 27" fill="none" stroke="#b2b2b2" stroke-width="2.6"/></g><g transform="translate(1669,42.5)"><rect x="1" y="1" width="28" height="23" fill="none" stroke="#b2b2b2" stroke-width="1.8"/><path d="M6 5L10 9M13 8L17 4M20 8h2v2h-2zM25 8h2v2h-2z" stroke="#b2b2b2" stroke-width="2.5"/><rect x="17" y="16" width="11" height="13" fill="#f0f0f0" stroke="#c8c8c8" stroke-width="1.6"/><path d="M20 18V27M23 18V27" stroke="#c8c8c8" stroke-width="1.2"/></g><g transform="translate(1710,43.0)"><rect x="4" y="1" width="22" height="6" fill="none" stroke="#b2b2b2" stroke-width="1.8"/><rect x="4" y="22" width="22" height="6" fill="none" stroke="#b2b2b2" stroke-width="1.8"/><path d="M0 14H12M19 14H29" stroke="#b2b2b2" stroke-width="2.4"/><path d="M10 10L16 14L10 18Z" fill="#b2b2b2"/></g><g transform="translate(1749,43.0)"><rect x="4" y="1" width="22" height="6" fill="none" stroke="#b2b2b2" stroke-width="1.8"/><rect x="4" y="22" width="22" height="6" fill="none" stroke="#b2b2b2" stroke-width="1.8"/><path d="M0 14H8M21 14H29M11 10L18 18M18 10L11 18" stroke="#b2b2b2" stroke-width="2.4"/></g><g transform="translate(1800,41.5)"><rect x="7" y="1" width="12" height="8" fill="none" stroke="#444" stroke-width="1.8"/><rect x="4" y="9" width="18" height="14" fill="none" stroke="#444" stroke-width="2"/><path d="M13 23V31" stroke="#444" stroke-width="2"/><text x="13" y="31" font-size="10" font-weight="bold" font-family="Liberation Sans" fill="#e8323c" text-anchor="middle" textLength="28" lengthAdjust="spacingAndGlyphs">TE ST</text></g><g transform="translate(1854,42.5)"><path d="M14 6H22V28H14" fill="none" stroke="#555" stroke-width="2.2"/><path d="M1 15H10V11L18 17L10 23V19H1Z" fill="#1a8ad4"/></g><g transform="translate(1904,42.5)"><path d="M14 6H22V28H14" fill="none" stroke="#c8c8c8" stroke-width="2.2"/><path d="M18 15H9V11L1 17L9 23V19H18Z" fill="#c8c8c8"/></g><g transform="translate(1952,42.5)"><rect x="1" y="1" width="28" height="28" rx="3" fill="none" stroke="#555" stroke-width="2.2"/><rect x="5" y="5" width="4" height="20" fill="#1a8ad4"/><rect x="9" y="5" width="4" height="20" fill="#333"/><rect x="13" y="5" width="12" height="20" fill="#444"/><path d="M17 9h3v2h-3zM17 14h3v2h-3zM17 19h3v2h-3z" fill="#4fb6e8"/></g><g transform="translate(1063,39.0)"><rect x="0" y="0" width="37" height="37" fill="#f6f6f6"/><path d="M1 36V1H37" fill="none" stroke="#bdbdbd" stroke-width="2"/><path d="M9 30V10H30V16" fill="none" stroke="#555" stroke-width="1.8"/><path d="M9 10.5H30" stroke="#555" stroke-width="3"/><path d="M14 33V18Q14 16 16 16H20L22 18H34" fill="none" stroke="#1588d2" stroke-width="2.4"/><path d="M19 33L21 21H35L33 33Z" fill="#fff" stroke="#1588d2" stroke-width="2"/></g><g transform="translate(1107,43.5)"><path d="M1 16V1H23V4" fill="none" stroke="#444" stroke-width="2.4"/><path d="M6 26V8H21L24 11V14" fill="none" stroke="#444" stroke-width="2"/><path d="M10 13H18M10 17H16" stroke="#444" stroke-width="1.8"/><path d="M13 21H24V17L29 22L24 27V23H13Z" fill="#1a8ad4"/></g><g transform="translate(1205,43.0)"><rect x="0" y="0" width="27" height="30" fill="#efe9d6"/><path d="M2 28V2H21V5" fill="none" stroke="#555" stroke-width="1.8"/><rect x="6" y="5" width="19" height="24" fill="#f2edde" stroke="#444" stroke-width="1.8"/><path d="M11 8V16M8 13L11 16L14 13M19 8V16M16 13L19 16L22 13" fill="none" stroke="#1a8ad4" stroke-width="1.8"/><path d="M9 20H11M14 20H23M9 23H11M14 23H23M9 26H11M14 26H23" stroke="#444" stroke-width="1.5"/></g><line x1="644" y1="38.5" x2="644" y2="75.5" stroke="#b8b8b8" stroke-width="1.6"/><line x1="773.5" y1="38.5" x2="773.5" y2="75.5" stroke="#b8b8b8" stroke-width="1.6"/><line x1="863" y1="38.5" x2="863" y2="75.5" stroke="#b8b8b8" stroke-width="1.6"/><line x1="914" y1="38.5" x2="914" y2="75.5" stroke="#b8b8b8" stroke-width="1.6"/><line x1="965" y1="38.5" x2="965" y2="75.5" stroke="#b8b8b8" stroke-width="1.6"/><line x1="1055.7" y1="38.5" x2="1055.7" y2="75.5" stroke="#b8b8b8" stroke-width="1.6"/><line x1="1337.5" y1="38.5" x2="1337.5" y2="75.5" stroke="#b8b8b8" stroke-width="1.6"/><line x1="1427" y1="38.5" x2="1427" y2="75.5" stroke="#b8b8b8" stroke-width="1.6"/><line x1="1517.5" y1="38.5" x2="1517.5" y2="75.5" stroke="#b8b8b8" stroke-width="1.6"/><line x1="1568" y1="38.5" x2="1568" y2="75.5" stroke="#b8b8b8" stroke-width="1.6"/><line x1="1619" y1="38.5" x2="1619" y2="75.5" stroke="#b8b8b8" stroke-width="1.6"/><line x1="1787.5" y1="38.5" x2="1787.5" y2="75.5" stroke="#b8b8b8" stroke-width="1.6"/><line x1="1839" y1="38.5" x2="1839" y2="75.5" stroke="#b8b8b8" stroke-width="1.6"/><line x1="1890" y1="38.5" x2="1890" y2="75.5" stroke="#b8b8b8" stroke-width="1.6"/><line x1="1941" y1="38.5" x2="1941" y2="75.5" stroke="#b8b8b8" stroke-width="1.6"/><g transform="translate(487,87.0)"><rect x="1" y="1" width="28" height="28" rx="3" fill="none" stroke="#b2b2b2" stroke-width="1.8"/><text x="15" y="21" font-size="12" font-family="Liberation Sans" fill="#b2b2b2" text-anchor="middle" textLength="22" lengthAdjust="spacingAndGlyphs">LAD</text></g><g transform="translate(526,87.0)"><rect x="1" y="1" width="28" height="28" rx="3" fill="none" stroke="#b2b2b2" stroke-width="1.6"/><rect x="5" y="5" width="20" height="20" rx="2" fill="none" stroke="#b2b2b2" stroke-width="1.6"/><path d="M18 10 Q15 7 12 10 Q10 13 15 15 Q20 17 17 21 Q14 23 11 20" fill="none" stroke="#b2b2b2" stroke-width="1.4"/></g><g transform="translate(566,87.0)"><rect x="1" y="1" width="28" height="28" rx="3" fill="none" stroke="#b2b2b2" stroke-width="1.6"/><path d="M18 9 Q15 6 12 9 Q10 13 15 15 Q20 17 17 22 Q14 24 11 21" fill="none" stroke="#b2b2b2" stroke-width="1.4"/></g><g transform="translate(605,87.0)"><path d="M15 0V30" stroke="#b2b2b2" stroke-width="2.2"/><path d="M1 14 L4 10 H26 L29 14 L26 18 H4Z" fill="none" stroke="#b2b2b2" stroke-width="1.5"/></g><g transform="translate(645,87.0)"><path d="M14 1V14" stroke="#b2b2b2" stroke-width="1.8"/><path d="M1 14H27L14 29Z" fill="#b2b2b2"/></g><g transform="translate(684,87.0)"><path d="M14 0V13" stroke="#b2b2b2" stroke-width="1.8"/><path d="M2 13H26L14 27Z" fill="none" stroke="#b2b2b2" stroke-width="1.8"/></g><g transform="translate(733,87.0)"><path d="M5 0V30M25 5V30M5 8H25V30" fill="none" stroke="#b2b2b2" stroke-width="1.6"/><path d="M0 19H10M20 19H30" stroke="#b2b2b2" stroke-width="2.6"/></g><g transform="translate(772,87.0)"><path d="M5 0V30M25 0V23H5" fill="none" stroke="#b2b2b2" stroke-width="1.6"/><path d="M0 12H10M20 12H30" stroke="#b2b2b2" stroke-width="2.6"/></g><g transform="translate(811,87.0)"><path d="M5 0V30M24 20V30" fill="none" stroke="#b2b2b2" stroke-width="1.6"/><path d="M0 17H30M0 21H30" stroke="#b2b2b2" stroke-width="1.4"/><path d="M0 7H10" stroke="#b2b2b2" stroke-width="2.6"/></g><g transform="translate(850,87.0)"><path d="M5 0V30M24 0V10" fill="none" stroke="#b2b2b2" stroke-width="1.6"/><path d="M0 9H30M0 13H30" stroke="#b2b2b2" stroke-width="1.4"/><path d="M0 22H10" stroke="#b2b2b2" stroke-width="2.6"/></g><g transform="translate(902,87.0)"><path d="M0 15H27" stroke="#b2b2b2" stroke-width="1.6"/><path d="M23 10L30 15L23 20Z" fill="#b2b2b2"/></g><line x1="722.5" y1="85" x2="722.5" y2="120" stroke="#b8b8b8" stroke-width="1.6"/><line x1="890" y1="85" x2="890" y2="120" stroke="#b8b8b8" stroke-width="1.6"/><g transform="translate(950,87.0)"><path d="M4 30V3" stroke="#b2b2b2" stroke-width="1.6"/><path d="M0 7L4 0L8 7Z" fill="#b2b2b2"/></g><g transform="translate(980,87.0)"><path d="M0 8H25V28" fill="none" stroke="#b2b2b2" stroke-width="1.6"/><path d="M21 23L25 30L29 23Z" fill="#b2b2b2"/></g><g transform="translate(1018,87.0)"><path d="M0 24H26V4" fill="none" stroke="#b2b2b2" stroke-width="1.6"/><path d="M22 8L26 1L30 8Z" fill="#b2b2b2"/></g><g transform="translate(1077,87.0)"><path d="M0 15H10M20 15H30M10 2V29M20 2V29" stroke="#b2b2b2" stroke-width="1.6"/></g><g transform="translate(1115,87.0)"><path d="M0 15H10M20 15H30M10 2V29M20 2V29" stroke="#b2b2b2" stroke-width="1.6"/><line x1="3" y1="28" x2="27" y2="4" stroke="#b2b2b2" stroke-width="1.6"/></g><g transform="translate(1153,87.0)"><path d="M0 15H10M20 15H30M10 2V29M20 2V29" stroke="#b2b2b2" stroke-width="1.6"/><line x1="15" y1="9" x2="15" y2="22" stroke="#b2b2b2" stroke-width="1.6"/></g><g transform="translate(1193,87.0)"><path d="M0 15H10M20 15H30M10 2V29M20 2V29" stroke="#b2b2b2" stroke-width="1.6"/><line x1="13" y1="28" x2="27" y2="4" stroke="#b2b2b2" stroke-width="1.6"/><line x1="8" y1="28" x2="22" y2="4" stroke="#b2b2b2" stroke-width="1.6"/></g><g transform="translate(1233,87.0)"><path d="M0 15H10M20 15H30M10 2V29M20 2V29" stroke="#b2b2b2" stroke-width="1.6"/><path d="M15 28V5" stroke="#b2b2b2" stroke-width="1.6"/><path d="M11 10L15 3L19 10Z" fill="#b2b2b2"/></g><g transform="translate(1272,87.0)"><path d="M0 15H10M20 15H30M10 2V29M20 2V29" stroke="#b2b2b2" stroke-width="1.6"/><path d="M15 3V24" stroke="#b2b2b2" stroke-width="1.6"/><path d="M11 20L15 27L19 20Z" fill="#b2b2b2"/></g><g transform="translate(1322,87.0)"><path d="M0 15H6M24 15H30M6 2V29M24 2V29" stroke="#b2b2b2" stroke-width="1.6"/><text x="15" y="21" font-size="16" font-family="Liberation Sans" fill="#b2b2b2" text-anchor="middle">S</text></g><g transform="translate(1362,87.0)"><path d="M0 15H4M26 15H30M9 3H5V27H9M21 3H25V27H21" fill="none" stroke="#b2b2b2" stroke-width="1.6"/><text x="15" y="21" font-size="16" font-family="Liberation Sans" fill="#b2b2b2" text-anchor="middle">C</text></g><g transform="translate(1412,87.0)"><path d="M0 15H3M27 15H30" stroke="#b2b2b2" stroke-width="1.6"/><path d="M9 3 Q3 15 9 27M21 3 Q27 15 21 27" fill="none" stroke="#b2b2b2" stroke-width="1.6"/></g><g transform="translate(1450,87.0)"><path d="M0 15H3M27 15H30" stroke="#b2b2b2" stroke-width="1.6"/><path d="M9 3 Q3 15 9 27M21 3 Q27 15 21 27" fill="none" stroke="#b2b2b2" stroke-width="1.6"/><text x="15" y="21" font-size="16" font-family="Liberation Sans" fill="#b2b2b2" text-anchor="middle">I</text></g><g transform="translate(1490,87.0)"><path d="M0 15H4M26 15H30M9 3H5V27H9M21 3H25V27H21" fill="none" stroke="#b2b2b2" stroke-width="1.6"/><text x="15" y="21" font-size="16" font-family="Liberation Sans" fill="#b2b2b2" text-anchor="middle">A</text></g><g transform="translate(1529,87.0)"><path d="M0 15H4M26 15H30M9 3H5V27H9M21 3H25V27H21" fill="none" stroke="#b2b2b2" stroke-width="1.6"/><text x="15" y="21" font-size="16" font-family="Liberation Sans" fill="#b2b2b2" text-anchor="middle">F</text></g><g transform="translate(1580,87.0)"><rect x="3" y="4" width="25" height="20" fill="none" stroke="#b2b2b2" stroke-width="1.6"/><path d="M9 4V24M13 9H24M13 13H24M13 17H22M5 9H7M5 14H7" stroke="#b2b2b2" stroke-width="1.6"/><path d="M0 6H3" stroke="#b2b2b2" stroke-width="1.4"/></g><g transform="translate(1632,87.0)"><path d="M0 15H28" stroke="#b2b2b2" stroke-width="1.6"/></g><g transform="translate(1683,87.0)"><path d="M2 3V28" stroke="#b2b2b2" stroke-width="1.6"/></g><g transform="translate(1709,87.0)"><path d="M0 15H28M3 29L28 1" stroke="#b2b2b2" stroke-width="1.4"/></g><g transform="translate(1749,87.0)"><path d="M14 1V29M2 2L26 28M26 2L2 28" stroke="#b2b2b2" stroke-width="1.2"/></g><g transform="translate(1798,87.0)"><path d="M4 30V3" stroke="#b2b2b2" stroke-width="1.6"/><path d="M0 7L4 0L8 7Z" fill="#b2b2b2"/></g><g transform="translate(1837,87.0)"><path d="M4 0V27" stroke="#b2b2b2" stroke-width="1.6"/><path d="M0 23L4 30L8 23Z" fill="#b2b2b2"/></g><line x1="1310.6" y1="83" x2="1310.6" y2="120" stroke="#b8b8b8" stroke-width="1.6"/><line x1="1400" y1="83" x2="1400" y2="120" stroke="#b8b8b8" stroke-width="1.6"/><line x1="1568" y1="83" x2="1568" y2="120" stroke="#b8b8b8" stroke-width="1.6"/><line x1="1619" y1="83" x2="1619" y2="120" stroke="#b8b8b8" stroke-width="1.6"/></svg>
<div class="a" style="left:1877px;top:88px;width:63px;height:30px;border:2px solid #555;background:#f0f0f0"></div>
<div class="a t" style="left:1877px;top:88px;height:28px;line-height:28px;width:63px;text-align:center;color:#1a1aff;font-size:19px"><span class="c"><i>本</i></span><span class="c"><i>地</i></span></div>
<div class="a" style="left:1949px;top:88px;width:343px;height:30px;border:2px solid #555;background:#f0f0f0"></div>
<div class="a t" style="left:1986px;top:88px;height:28px;line-height:28px;color:#1a1aff;font-size:17px"><span class="c"><i>未</i></span><span class="c"><i>登</i></span><span class="c"><i>录</i></span>:2_<span class="c"><i>底</i></span><span class="c"><i>座</i></span><span class="c"><i>装</i></span><span class="c"><i>调</i></span>:192.168.200.20</div>
<div class="a t" style="left:474px;top:125px;height:38px;line-height:38px;"><span class="c"><i>工</i></span><span class="c"><i>程</i></span><span class="c"><i>管</i></span><span class="c"><i>理</i></span></div>
<svg class="a" style="left:774px;top:136px" width="40" height="18" viewBox="0 0 40 18"><path d="M4 3H11V9H13V11H2V9H4Z M7 11V16" fill="#111" stroke="#111" stroke-width="1.3"/><path d="M28 4L39 15M39 4L28 15" stroke="#111" stroke-width="2.2"/></svg>
<div class="a" style="left:469px;top:166px;width:353px;height:1134px;background:#fff;border:1px solid #a0a0a0"></div>
<div class="a" style="left:524px;top:194px;width:1px;height:648px;background:repeating-linear-gradient(to bottom,#a0a0a0 0 1px,transparent 1px 2px)"></div>
<div class="a" style="left:558px;top:314px;width:1px;height:378px;background:repeating-linear-gradient(to bottom,#a0a0a0 0 1px,transparent 1px 2px)"></div>
<div class="a" style="left:558px;top:734px;width:1px;height:18px;background:repeating-linear-gradient(to bottom,#a0a0a0 0 1px,transparent 1px 2px)"></div>
<div class="a" style="left:490px;top:182px;width:19px;height:1px;background:repeating-linear-gradient(to right,#a0a0a0 0 1px,transparent 1px 2px)"></div>
<div class="a" style="left:483px;top:176px;width:13px;height:13px;border:1px solid #a3a3a3;border-radius:2px;background:linear-gradient(#fdfdfd,#e2e2e2)"></div>
<div class="a" style="left:486px;top:182px;width:7px;height:1.3px;background:#3d5aa8"></div>
<svg class="a" style="left:509px;top:168px;" width="30" height="30" viewBox="0 0 30 30"><rect x="3" y="3.5" width="25" height="18" fill="#fff" stroke="#63648c" stroke-width="2"/><rect x="5" y="5.5" width="21" height="14" fill="#0c7cc4"/><rect x="13" y="22" width="5" height="2.5" fill="#63648c"/><rect x="9" y="24" width="13" height="3" fill="#63648c"/></svg>
<div class="a t" style="left:546px;top:167px;height:30px;line-height:30px;letter-spacing:-0.8px"><span class="c"><i>接</i></span><span class="c"><i>收</i></span><span class="c"><i>机</i></span>_2_<span class="c"><i>底</i></span><span class="c"><i>座</i></span><span class="c"><i>装</i></span><span class="c"><i>调</i></span>PLC [Easy521]</div>
<div class="a" style="left:525px;top:212px;width:19px;height:1px;background:repeating-linear-gradient(to right,#a0a0a0 0 1px,transparent 1px 2px)"></div>
<div class="a" style="left:518px;top:206px;width:13px;height:13px;border:1px solid #a3a3a3;border-radius:2px;background:linear-gradient(#fdfdfd,#e2e2e2)"></div>
<div class="a" style="left:521px;top:212px;width:7px;height:1.3px;background:#3d5aa8"></div>
<div class="a" style="left:524px;top:209px;width:1.3px;height:7px;background:#3d5aa8"></div>
<svg class="a" style="left:544px;top:198px;" width="30" height="30" viewBox="0 0 30 30"><ellipse cx="15" cy="15" rx="14" ry="5.5" fill="none" stroke="#7a7a7a" stroke-width="1.6" transform="rotate(-28 15 15)"/><circle cx="15" cy="15.5" r="10.5" fill="#0c7cc4"/><path d="M9 10 L13 8 L15 11 L12 14 L8 13Z M16 16 L20 15 L21 19 L18 23 L16 20Z M19 8 L22 10 L21 12 L18 11Z" fill="#fff"/><path d="M3 23 Q15 20 28 7" fill="none" stroke="#7a7a7a" stroke-width="1.6"/></svg>
<div class="a t" style="left:580px;top:197px;height:30px;line-height:30px;"><span class="c"><i>系</i></span><span class="c"><i>统</i></span><span class="c"><i>变</i></span><span class="c"><i>量</i></span><span class="c"><i>表</i></span></div>
<div class="a" style="left:525px;top:242px;width:19px;height:1px;background:repeating-linear-gradient(to right,#a0a0a0 0 1px,transparent 1px 2px)"></div>
<div class="a" style="left:518px;top:236px;width:13px;height:13px;border:1px solid #a3a3a3;border-radius:2px;background:linear-gradient(#fdfdfd,#e2e2e2)"></div>
<div class="a" style="left:521px;top:242px;width:7px;height:1.3px;background:#3d5aa8"></div>
<div class="a" style="left:524px;top:239px;width:1.3px;height:7px;background:#3d5aa8"></div>
<svg class="a" style="left:544px;top:228px;" width="30" height="30" viewBox="0 0 30 30"><rect x="4" y="3" width="22" height="24" fill="#fff" stroke="#63648c" stroke-width="2"/><rect x="4" y="3" width="22" height="3" fill="#63648c"/><path d="M7 9.5H23M7 12.5H23M7 15.5H23M7 18.5H23M7 21.5H19" stroke="#0c7cc4" stroke-width="1.6"/><path d="M21 26 L26 21 L26 26Z" fill="#63648c"/></svg>
<div class="a t" style="left:580px;top:227px;height:30px;line-height:30px;"><span class="c"><i>全</i></span><span class="c"><i>局</i></span><span class="c"><i>变</i></span><span class="c"><i>量</i></span></div>
<div class="a" style="left:525px;top:272px;width:19px;height:1px;background:repeating-linear-gradient(to right,#a0a0a0 0 1px,transparent 1px 2px)"></div>
<div class="a" style="left:518px;top:266px;width:13px;height:13px;border:1px solid #a3a3a3;border-radius:2px;background:linear-gradient(#fdfdfd,#e2e2e2)"></div>
<div class="a" style="left:521px;top:272px;width:7px;height:1.3px;background:#3d5aa8"></div>
<div class="a" style="left:524px;top:269px;width:1.3px;height:7px;background:#3d5aa8"></div>
<svg class="a" style="left:544px;top:258px;" width="30" height="30" viewBox="0 0 30 30"><rect x="2" y="2" width="26" height="26" fill="#fff" stroke="#63648c" stroke-width="2"/><path d="M3 15H10M10 9V21M19 9V21M19 15H27" stroke="#0c7cc4" stroke-width="1.8" fill="none"/></svg>
<div class="a t" style="left:580px;top:257px;height:30px;line-height:30px;"><span class="c"><i>编</i></span><span class="c"><i>程</i></span></div>
<div class="a" style="left:525px;top:302px;width:19px;height:1px;background:repeating-linear-gradient(to right,#a0a0a0 0 1px,transparent 1px 2px)"></div>
<div class="a" style="left:518px;top:296px;width:13px;height:13px;border:1px solid #a3a3a3;border-radius:2px;background:linear-gradient(#fdfdfd,#e2e2e2)"></div>
<div class="a" style="left:521px;top:302px;width:7px;height:1.3px;background:#3d5aa8"></div>
<svg class="a" style="left:544px;top:288px;" width="30" height="30" viewBox="0 0 30 30"><path d="M14.5 26H1.5V1.5H25.5V10" fill="none" stroke="#63648c" stroke-width="1.6"/><path d="M5.5 2V26M12.5 2V26M20 3V11" stroke="#63648c" stroke-width="1.4"/><rect x="3.5" y="6" width="4" height="5" rx="1" fill="#63648c"/><rect x="10.5" y="8" width="4" height="5" rx="1" fill="#63648c"/><rect x="18" y="6" width="4" height="4" rx="1" fill="#63648c"/><path d="M28.51,19.50 L28.38,20.77 L26.46,21.35 L26.02,22.18 L26.60,24.10 L25.62,24.91 L23.85,23.96 L22.94,24.24 L22.00,26.01 L20.73,25.88 L20.15,23.96 L19.32,23.52 L17.40,24.10 L16.59,23.12 L17.54,21.35 L17.26,20.44 L15.49,19.50 L15.62,18.23 L17.54,17.65 L17.98,16.82 L17.40,14.90 L18.38,14.09 L20.15,15.04 L21.06,14.76 L22.00,12.99 L23.27,13.12 L23.85,15.04 L24.68,15.48 L26.60,14.90 L27.41,15.88 L26.46,17.65 L26.74,18.56Z" fill="#0c7cc4"/><circle cx="22" cy="19.5" r="2.7300000000000004" fill="#fff"/><circle cx="22" cy="19.5" r="1.3650000000000002" fill="#0c7cc4"/></svg>
<div class="a t" style="left:580px;top:287px;height:30px;line-height:30px;"><span class="c"><i>配</i></span><span class="c"><i>置</i></span></div>
<div class="a" style="left:559px;top:332px;width:19px;height:1px;background:repeating-linear-gradient(to right,#a0a0a0 0 1px,transparent 1px 2px)"></div>
<svg class="a" style="left:578px;top:318px;" width="30" height="30" viewBox="0 0 30 30"><polyline points="0.5,14.5 5,14.5 7,12.5 9.5,14 12,8.5 14,18 16,12 17.5,10 19.5,14 21.5,10.5 24,16.5 26.5,16.5" fill="none" stroke="#0c7cc4" stroke-width="1.6" stroke-linejoin="round"/><rect x="1.5" y="22.5" width="26" height="6.5" fill="#fff" stroke="#63648c" stroke-width="1.6"/><path d="M4.5 25.75H8M12 25.75H25" stroke="#63648c" stroke-width="1.4"/></svg>
<div class="a t" style="left:615px;top:317px;height:30px;line-height:30px;"><span class="c"><i>输</i></span><span class="c"><i>入</i></span><span class="c"><i>滤</i></span><span class="c"><i>波</i></span></div>
<div class="a" style="left:559px;top:362px;width:19px;height:1px;background:repeating-linear-gradient(to right,#a0a0a0 0 1px,transparent 1px 2px)"></div>
<div class="a" style="left:552px;top:356px;width:13px;height:13px;border:1px solid #a3a3a3;border-radius:2px;background:linear-gradient(#fdfdfd,#e2e2e2)"></div>
<div class="a" style="left:555px;top:362px;width:7px;height:1.3px;background:#3d5aa8"></div>
<div class="a" style="left:558px;top:359px;width:1.3px;height:7px;background:#3d5aa8"></div>
<svg class="a" style="left:578px;top:348px;" width="30" height="30" viewBox="0 0 30 30"><rect x="5.5" y="3" width="12" height="23" fill="#fff" stroke="#63648c" stroke-width="1.6"/><rect x="10" y="3" width="13.5" height="21" fill="#fff" stroke="#63648c" stroke-width="1.6"/><path d="M11.5 8.2H15M11.5 12.2H15M11.5 16.3H15M11.5 19.5H15" stroke="#0c7cc4" stroke-width="2.4"/><path d="M18 8.2H21.5M18 12.2H21.5M18 16.3H21.5M18 19.5H21.5" stroke="#63648c" stroke-width="1.3"/><path d="M7 6.5H9M7 9H9" stroke="#0c7cc4" stroke-width="1.2"/></svg>
<div class="a t" style="left:615px;top:347px;height:30px;line-height:30px;">EXP-A</div>
<div class="a" style="left:559px;top:392px;width:19px;height:1px;background:repeating-linear-gradient(to right,#a0a0a0 0 1px,transparent 1px 2px)"></div>
<svg class="a" style="left:578px;top:378px;" width="30" height="30" viewBox="0 0 30 30"><rect x="5.5" y="3" width="12" height="23" fill="#fff" stroke="#63648c" stroke-width="1.6"/><rect x="10" y="3" width="13.5" height="21" fill="#fff" stroke="#63648c" stroke-width="1.6"/><path d="M11.5 8.2H15M11.5 12.2H15M11.5 16.3H15M11.5 19.5H15" stroke="#0c7cc4" stroke-width="2.4"/><path d="M18 8.2H21.5M18 12.2H21.5M18 16.3H21.5M18 19.5H21.5" stroke="#63648c" stroke-width="1.3"/><path d="M7 6.5H9M7 9H9" stroke="#0c7cc4" stroke-width="1.2"/></svg>
<div class="a t" style="left:615px;top:377px;height:30px;line-height:30px;">EXP-B</div>
<div class="a" style="left:559px;top:422px;width:19px;height:1px;background:repeating-linear-gradient(to right,#a0a0a0 0 1px,transparent 1px 2px)"></div>
<div class="a" style="left:552px;top:416px;width:13px;height:13px;border:1px solid #a3a3a3;border-radius:2px;background:linear-gradient(#fdfdfd,#e2e2e2)"></div>
<div class="a" style="left:555px;top:422px;width:7px;height:1.3px;background:#3d5aa8"></div>
<div class="a" style="left:558px;top:419px;width:1.3px;height:7px;background:#3d5aa8"></div>
<svg class="a" style="left:578px;top:408px;" width="30" height="30" viewBox="0 0 30 30"><path d="M2.7 5.7H12M2.7 10.5H9M2.7 15.1H11M2.7 19.6H12M2.7 24.2H26.5" stroke="#63648c" stroke-width="1.6"/><path d="M28.04,13.10 L27.90,14.55 L25.70,15.21 L25.19,16.17 L25.86,18.36 L24.73,19.29 L22.71,18.20 L21.68,18.51 L20.60,20.54 L19.15,20.40 L18.49,18.20 L17.53,17.69 L15.34,18.36 L14.41,17.23 L15.50,15.21 L15.19,14.18 L13.16,13.10 L13.30,11.65 L15.50,10.99 L16.01,10.03 L15.34,7.84 L16.47,6.91 L18.49,8.00 L19.52,7.69 L20.60,5.66 L22.05,5.80 L22.71,8.00 L23.67,8.51 L25.86,7.84 L26.79,8.97 L25.70,10.99 L26.01,12.02Z" fill="#0c7cc4"/><circle cx="20.6" cy="13.1" r="3.12" fill="#fff"/><circle cx="20.6" cy="13.1" r="1.56" fill="#0c7cc4"/></svg>
<div class="a t" style="left:615px;top:407px;height:30px;line-height:30px;"><span class="c"><i>模</i></span><span class="c"><i>块</i></span><span class="c"><i>配</i></span><span class="c"><i>置</i></span></div>
<div class="a" style="left:559px;top:452px;width:19px;height:1px;background:repeating-linear-gradient(to right,#a0a0a0 0 1px,transparent 1px 2px)"></div>
<svg class="a" style="left:578px;top:438px;" width="30" height="30" viewBox="0 0 30 30"><path d="M6 11 Q12 2 22 1.5 L26 2.5 L26.5 23 Q19 25 13 26.5 Q5 23 5 16Z" fill="#0c7cc4"/><path d="M16 5 L26 2.5 L26.5 23 L16 25 Q19 15 16 5Z" fill="#3fb0b8"/><rect x="14" y="14" width="13" height="9" rx="2" fill="#8c8c8c" transform="rotate(28 20.5 18.5)"/><rect x="21" y="17" width="6" height="8" rx="2" fill="#a8a8a8" transform="rotate(28 24 21)"/><rect x="-0.5" y="9" width="6" height="8.5" rx="2" fill="#8c8c8c"/></svg>
<div class="a t" style="left:615px;top:437px;height:30px;line-height:30px;"><span class="c"><i>电</i></span><span class="c"><i>子</i></span><span class="c"><i>凸</i></span><span class="c"><i>轮</i></span></div>
<div class="a" style="left:559px;top:482px;width:19px;height:1px;background:repeating-linear-gradient(to right,#a0a0a0 0 1px,transparent 1px 2px)"></div>
<div class="a" style="left:552px;top:476px;width:13px;height:13px;border:1px solid #a3a3a3;border-radius:2px;background:linear-gradient(#fdfdfd,#e2e2e2)"></div>
<div class="a" style="left:555px;top:482px;width:7px;height:1.3px;background:#3d5aa8"></div>
<div class="a" style="left:558px;top:479px;width:1.3px;height:7px;background:#3d5aa8"></div>
<svg class="a" style="left:578px;top:468px;" width="30" height="30" viewBox="0 0 30 30"><rect x="4" y="2" width="8" height="26" fill="#63648c"/><path d="M7 5V26M9.5 9V26" stroke="#fff" stroke-width="1"/><circle cx="21" cy="7" r="3.5" fill="#fff" stroke="#0c7cc4" stroke-width="2"/><rect x="14" y="14" width="13" height="14" fill="#fff" stroke="#63648c" stroke-width="1.8"/><circle cx="20.5" cy="21" r="4" fill="none" stroke="#888" stroke-width="1.8"/></svg>
<div class="a t" style="left:615px;top:467px;height:30px;line-height:30px;"><span class="c"><i>运</i></span><span class="c"><i>动</i></span><span class="c"><i>控</i></span><span class="c"><i>制</i></span><span class="c"><i>轴</i></span></div>
<div class="a" style="left:559px;top:512px;width:19px;height:1px;background:repeating-linear-gradient(to right,#a0a0a0 0 1px,transparent 1px 2px)"></div>
<svg class="a" style="left:578px;top:498px;" width="30" height="30" viewBox="0 0 30 30"><path d="M27.50,15.00 L27.26,17.44 L23.31,18.44 L22.48,20.00 L23.84,23.84 L21.94,25.39 L18.44,23.31 L16.76,23.83 L15.00,27.50 L12.56,27.26 L11.56,23.31 L10.00,22.48 L6.16,23.84 L4.61,21.94 L6.69,18.44 L6.17,16.76 L2.50,15.00 L2.74,12.56 L6.69,11.56 L7.52,10.00 L6.16,6.16 L8.06,4.61 L11.56,6.69 L13.24,6.17 L15.00,2.50 L17.44,2.74 L18.44,6.69 L20.00,7.52 L23.84,6.16 L25.39,8.06 L23.31,11.56 L23.83,13.24Z" fill="#fff" stroke="#63648c" stroke-width="1.4"/><circle cx="15" cy="15" r="5.5" fill="#fff" stroke="#63648c" stroke-width="1.4"/><circle cx="15" cy="15" r="2.8" fill="#0c7cc4"/></svg>
<div class="a t" style="left:615px;top:497px;height:30px;line-height:30px;"><span class="c"><i>轴</i></span><span class="c"><i>组</i></span><span class="c"><i>设</i></span><span class="c"><i>置</i></span></div>
<div class="a" style="left:559px;top:542px;width:19px;height:1px;background:repeating-linear-gradient(to right,#a0a0a0 0 1px,transparent 1px 2px)"></div>
<div class="a" style="left:552px;top:536px;width:13px;height:13px;border:1px solid #a3a3a3;border-radius:2px;background:linear-gradient(#fdfdfd,#e2e2e2)"></div>
<div class="a" style="left:555px;top:542px;width:7px;height:1.3px;background:#3d5aa8"></div>
<div class="a" style="left:558px;top:539px;width:1.3px;height:7px;background:#3d5aa8"></div>
<svg class="a" style="left:578px;top:528px;" width="30" height="30" viewBox="0 0 30 30"><path d="M0 10.3H30V13.1H0Z M17.3 3.2L30 13.1H17.3Z" fill="#0c7cc4"/><path d="M1 17.8H30V22H1Z M1 17.8H13.2V25.2Z" fill="#63648c"/></svg>
<div class="a t" style="left:615px;top:527px;height:30px;line-height:30px;">EtherCAT</div>
<div class="a" style="left:559px;top:572px;width:19px;height:1px;background:repeating-linear-gradient(to right,#a0a0a0 0 1px,transparent 1px 2px)"></div>
<svg class="a" style="left:578px;top:558px;" width="30" height="30" viewBox="0 0 30 30"><path d="M3 9 Q3 7 5 7 H25 Q27 7 27 9 L24 21 Q23.5 23 21.5 23 H8.5 Q6.5 23 6 21Z" fill="#fff" stroke="#63648c" stroke-width="1.8"/><path d="M9 12h2.5v2.5h-2.5zM14 12h2.5v2.5h-2.5zM19 12h2.5v2.5h-2.5zM11.5 16h2.5v2.5h-2.5zM16.5 16h2.5v2.5h-2.5z" fill="#0c7cc4"/></svg>
<div class="a t" style="left:615px;top:557px;height:30px;line-height:30px;">COM0</div>
<div class="a" style="left:559px;top:602px;width:19px;height:1px;background:repeating-linear-gradient(to right,#a0a0a0 0 1px,transparent 1px 2px)"></div>
<div class="a" style="left:552px;top:596px;width:13px;height:13px;border:1px solid #a3a3a3;border-radius:2px;background:linear-gradient(#fdfdfd,#e2e2e2)"></div>
<div class="a" style="left:555px;top:602px;width:7px;height:1.3px;background:#3d5aa8"></div>
<div class="a" style="left:558px;top:599px;width:1.3px;height:7px;background:#3d5aa8"></div>
<svg class="a" style="left:578px;top:588px;" width="30" height="30" viewBox="0 0 30 30"><path d="M3 9 Q3 7 5 7 H25 Q27 7 27 9 L24 21 Q23.5 23 21.5 23 H8.5 Q6.5 23 6 21Z" fill="#fff" stroke="#63648c" stroke-width="1.8"/><path d="M9 12h2.5v2.5h-2.5zM14 12h2.5v2.5h-2.5zM19 12h2.5v2.5h-2.5zM11.5 16h2.5v2.5h-2.5zM16.5 16h2.5v2.5h-2.5z" fill="#0c7cc4"/></svg>
<div class="a t" style="left:615px;top:587px;height:30px;line-height:30px;">COM2</div>
<div class="a" style="left:559px;top:632px;width:19px;height:1px;background:repeating-linear-gradient(to right,#a0a0a0 0 1px,transparent 1px 2px)"></div>
<div class="a" style="left:552px;top:626px;width:13px;height:13px;border:1px solid #a3a3a3;border-radius:2px;background:linear-gradient(#fdfdfd,#e2e2e2)"></div>
<div class="a" style="left:555px;top:632px;width:7px;height:1.3px;background:#3d5aa8"></div>
<div class="a" style="left:558px;top:629px;width:1.3px;height:7px;background:#3d5aa8"></div>
<svg class="a" style="left:578px;top:618px;" width="30" height="30" viewBox="0 0 30 30"><path d="M9 10V5H21V10H27V27H3V10Z" fill="#fff" stroke="#63648c" stroke-width="1.8"/><rect x="6" y="14" width="18" height="9" fill="none" stroke="#0c7cc4" stroke-width="2"/><path d="M10 18V23M14 18V23M18 18V23" stroke="#0c7cc4" stroke-width="1.6"/></svg>
<div class="a" style="left:612px;top:617px;width:60px;height:30px;background:#cbf7ff"></div>
<div class="a t" style="left:615px;top:617px;height:30px;line-height:30px;"><span class="c"><i>以</i></span><span class="c"><i>太</i></span><span class="c"><i>网</i></span></div>
<div class="a" style="left:559px;top:662px;width:19px;height:1px;background:repeating-linear-gradient(to right,#a0a0a0 0 1px,transparent 1px 2px)"></div>
<svg class="a" style="left:578px;top:648px;" width="30" height="30" viewBox="0 0 30 30"><path d="M14.5 26H1.5V1.5H25.5V10" fill="none" stroke="#63648c" stroke-width="1.6"/><path d="M5.5 2V26M12.5 2V26M20 3V11" stroke="#63648c" stroke-width="1.4"/><rect x="3.5" y="6" width="4" height="5" rx="1" fill="#63648c"/><rect x="10.5" y="8" width="4" height="5" rx="1" fill="#63648c"/><rect x="18" y="6" width="4" height="4" rx="1" fill="#63648c"/><path d="M28.51,19.50 L28.38,20.77 L26.46,21.35 L26.02,22.18 L26.60,24.10 L25.62,24.91 L23.85,23.96 L22.94,24.24 L22.00,26.01 L20.73,25.88 L20.15,23.96 L19.32,23.52 L17.40,24.10 L16.59,23.12 L17.54,21.35 L17.26,20.44 L15.49,19.50 L15.62,18.23 L17.54,17.65 L17.98,16.82 L17.40,14.90 L18.38,14.09 L20.15,15.04 L21.06,14.76 L22.00,12.99 L23.27,13.12 L23.85,15.04 L24.68,15.48 L26.60,14.90 L27.41,15.88 L26.46,17.65 L26.74,18.56Z" fill="#0c7cc4"/><circle cx="22" cy="19.5" r="2.7300000000000004" fill="#fff"/><circle cx="22" cy="19.5" r="1.3650000000000002" fill="#0c7cc4"/></svg>
<div class="a" style="left:612px;top:647px;width:107px;height:31px;background:#0078d7"></div>
<div class="a t" style="left:615px;top:647px;height:30px;line-height:30px;color:#fff">EtherNet/IP</div>
<div class="a" style="left:559px;top:692px;width:19px;height:1px;background:repeating-linear-gradient(to right,#a0a0a0 0 1px,transparent 1px 2px)"></div>
<div class="a" style="left:552px;top:686px;width:13px;height:13px;border:1px solid #a3a3a3;border-radius:2px;background:linear-gradient(#fdfdfd,#e2e2e2)"></div>
<div class="a" style="left:555px;top:692px;width:7px;height:1.3px;background:#3d5aa8"></div>
<div class="a" style="left:558px;top:689px;width:1.3px;height:7px;background:#3d5aa8"></div>
<svg class="a" style="left:578px;top:678px;" width="30" height="30" viewBox="0 0 30 30"><path d="M4 5H13L15 7H26V18H4Z" fill="#fff" stroke="#63648c" stroke-width="1.8"/><path d="M7 10h3v2h-3zM12 10h3v2h-3zM17 10h3v2h-3zM22 10h2v2h-2z" fill="#6aa06a"/><rect x="5" y="16" width="22" height="11" fill="#0c7cc4"/><text x="16" y="26" font-size="10" font-family="Liberation Sans" font-weight="bold" fill="#fff" text-anchor="middle">OPC</text></svg>
<div class="a t" style="left:615px;top:677px;height:30px;line-height:30px;">OPC UA</div>
<div class="a" style="left:525px;top:722px;width:19px;height:1px;background:repeating-linear-gradient(to right,#a0a0a0 0 1px,transparent 1px 2px)"></div>
<div class="a" style="left:518px;top:716px;width:13px;height:13px;border:1px solid #a3a3a3;border-radius:2px;background:linear-gradient(#fdfdfd,#e2e2e2)"></div>
<div class="a" style="left:521px;top:722px;width:7px;height:1.3px;background:#3d5aa8"></div>
<svg class="a" style="left:544px;top:708px;" width="30" height="30" viewBox="0 0 30 30"><path d="M0 7H12M0 12H10M0 17H11M0 22H7M0 27H11" stroke="#63648c" stroke-width="1.6"/><polyline points="10,27 17,4.5 19.5,4.5 23,15 29,15" fill="none" stroke="#2a9fd0" stroke-width="1.8"/></svg>
<div class="a t" style="left:580px;top:707px;height:30px;line-height:30px;"><span class="c"><i>变</i></span><span class="c"><i>量</i></span><span class="c"><i>监</i></span><span class="c"><i>控</i></span><span class="c"><i>表</i></span></div>
<div class="a" style="left:559px;top:752px;width:19px;height:1px;background:repeating-linear-gradient(to right,#a0a0a0 0 1px,transparent 1px 2px)"></div>
<svg class="a" style="left:578px;top:738px;" width="30" height="30" viewBox="0 0 30 30"><rect x="4" y="2" width="22" height="26" fill="#fff" stroke="#63648c" stroke-width="1.8"/><path d="M7 6H23M7 9H23M7 12H23M7 15H23M7 18H23M7 21H23M7 24H16" stroke="#0c7cc4" stroke-width="1.5"/></svg>
<div class="a t" style="left:615px;top:737px;height:30px;line-height:30px;">MAIN</div>
<div class="a" style="left:525px;top:782px;width:19px;height:1px;background:repeating-linear-gradient(to right,#a0a0a0 0 1px,transparent 1px 2px)"></div>
<svg class="a" style="left:544px;top:768px;" width="30" height="30" viewBox="0 0 30 30"><rect x="0.5" y="2" width="27" height="26" fill="#fff" stroke="#63648c" stroke-width="1.8"/><path d="M3 7 Q6 8 10 12 L17 20 L21 22M3 22 L17 9 L21 7" fill="none" stroke="#0c7cc4" stroke-width="1.5"/><path d="M20 3.5L26 7L20 10.5ZM20 18.5L26 22L20 25.5Z" fill="#0c7cc4"/></svg>
<div class="a t" style="left:580px;top:767px;height:30px;line-height:30px;"><span class="c"><i>交</i></span><span class="c"><i>叉</i></span><span class="c"><i>引</i></span><span class="c"><i>用</i></span><span class="c"><i>表</i></span></div>
<div class="a" style="left:525px;top:812px;width:19px;height:1px;background:repeating-linear-gradient(to right,#a0a0a0 0 1px,transparent 1px 2px)"></div>
<svg class="a" style="left:544px;top:798px;" width="30" height="30" viewBox="0 0 30 30"><path d="M5 8 V24 Q5 28 15 28 Q25 28 25 24 V8" fill="#fff" stroke="#63648c" stroke-width="1.8"/><path d="M5 14 Q5 17 15 17 Q25 17 25 14M5 19 Q5 22 15 22 Q25 22 25 19" fill="none" stroke="#63648c" stroke-width="1.6"/><ellipse cx="15" cy="7.5" rx="10" ry="4.5" fill="#0c7cc4" stroke="#63648c" stroke-width="1"/></svg>
<div class="a t" style="left:580px;top:797px;height:30px;line-height:30px;"><span class="c"><i>元</i></span><span class="c"><i>件</i></span><span class="c"><i>使</i></span><span class="c"><i>用</i></span><span class="c"><i>表</i></span></div>
<div class="a" style="left:525px;top:842px;width:19px;height:1px;background:repeating-linear-gradient(to right,#a0a0a0 0 1px,transparent 1px 2px)"></div>
<svg class="a" style="left:544px;top:828px;" width="30" height="30" viewBox="0 0 30 30"><rect x="1" y="2" width="26" height="26" fill="#c8e4c4" stroke="#63648c" stroke-width="1.8"/><path d="M2 17H26M10 3V27M18 3V27" stroke="#999" stroke-width="1.4"/><path d="M3 17 Q6 3 10 10 Q14 18 17 24 Q21 28 24 16" fill="none" stroke="#0c7cc4" stroke-width="1.8"/></svg>
<div class="a t" style="left:580px;top:827px;height:30px;line-height:30px;">Trace</div>
<div class="a" style="left:829px;top:126px;width:1577px;height:1px;background:#a0a0a0"></div>
<div class="a" style="left:829px;top:126px;width:1px;height:1134px;background:#a0a0a0"></div>
<div class="a" style="left:834px;top:131px;width:1572px;height:1125px;background:#fff;border-left:2px solid #7f7f7f;border-top:2px solid #7f7f7f"></div>
<div class="a" style="left:836px;top:353px;width:315px;height:72px;background:#e1e1e1"></div>
<div class="a t" style="left:835px;top:158px;height:30px;line-height:30px;width:330px;text-align:center;"><span class="c"><i>生</i></span><span class="c"><i>产</i></span><span class="c"><i>者</i></span><span class="c"><i>标</i></span><span class="c"><i>签</i></span></div>
<div class="a t" style="left:835px;top:230px;height:30px;line-height:30px;width:330px;text-align:center;"><span class="c"><i>服</i></span><span class="c"><i>务</i></span><span class="c"><i>消</i></span><span class="c"><i>息</i></span><span class="c"><i>标</i></span><span class="c"><i>签</i></span></div>
<div class="a t" style="left:835px;top:302px;height:30px;line-height:30px;width:330px;text-align:center;font-family:'Liberation Mono',monospace;transform:scaleY(1.18);transform-origin:0 50%;-webkit-text-stroke:0.3px #000;font-size:15px;">EtherNet/IP Adapter</div>
<div class="a t" style="left:835px;top:374px;height:30px;line-height:30px;width:330px;text-align:center;font-family:'Liberation Mono',monospace;transform:scaleY(1.18);transform-origin:0 50%;-webkit-text-stroke:0.3px #000;font-size:15px;">I/O<span class="c" style="font-size:18px;font-family:Liberation Sans"><i>映</i></span><span class="c" style="font-size:18px;font-family:Liberation Sans"><i>射</i></span></div>
<div class="a t" style="left:835px;top:446px;height:30px;line-height:30px;width:330px;text-align:center;"><span class="c"><i>状</i></span><span class="c"><i>态</i></span></div>
<div class="a t" style="left:835px;top:518px;height:30px;line-height:30px;width:330px;text-align:center;"><span class="c"><i>信</i></span><span class="c"><i>息</i></span></div>
<div class="a" style="left:1151px;top:133px;width:2px;height:1095px;background:#bcbcbc"></div>
<div class="a" style="left:1171px;top:145px;width:19px;height:19px;border:2px solid #8a8a8a;background:linear-gradient(#f4f4f4,#dedede)"></div>
<svg class="a" style="left:1171px;top:145px" width="19" height="19"><path d="M4.5 9.5L8 13.5L15 5" fill="none" stroke="#5a5a5a" stroke-width="2.6"/></svg>
<div class="a t" style="left:1193px;top:140px;height:30px;line-height:30px;color:#3a6c98"><span class="c"><i>十</i></span><span class="c"><i>六</i></span><span class="c"><i>进</i></span><span class="c"><i>制</i></span><span class="c"><i>显</i></span><span class="c"><i>示</i></span><span class="c"><i>当</i></span><span class="c"><i>前</i></span><span class="c"><i>值</i></span></div>
<div class="a" style="left:1154px;top:172px;width:1092px;height:36px;border:2px solid #7a7a7a;border-right:1px solid #c8ccd4;background:linear-gradient(#fafbfc,#e6e8ee)"></div>
<div class="a" style="left:1156px;top:174px;width:1088px;height:1px;background:#cfd8e4"></div>
<div class="a" style="left:1486px;top:175px;width:2px;height:31px;background:#d3dae4"></div>
<div class="a" style="left:1892px;top:175px;width:2px;height:31px;background:#d3dae4"></div>
<div class="a" style="left:2011px;top:175px;width:2px;height:31px;background:#d3dae4"></div>
<div class="a t" style="left:1220px;top:176px;width:200px;height:30px;line-height:30px;text-align:center"><span class="c"><i>变</i></span><span class="c"><i>量</i></span></div>
<div class="a t" style="left:1589px;top:176px;width:200px;height:30px;line-height:30px;text-align:center"><span class="c"><i>通</i></span><span class="c"><i>道</i></span></div>
<div class="a t" style="left:1851px;top:176px;width:200px;height:30px;line-height:30px;text-align:center"><span class="c"><i>类</i></span><span class="c"><i>型</i></span></div>
<div class="a t" style="left:2040px;top:176px;width:200px;height:30px;line-height:30px;text-align:center"><span class="c"><i>当</i></span><span class="c"><i>前</i></span><span class="c"><i>值</i></span></div>
<div class="a" style="left:1155px;top:207px;width:1090px;height:36px;background:#f3f3f3"></div>
<svg class="a" style="left:1163px;top:213px" width="14" height="14"><rect x="0.5" y="0.5" width="12" height="12" fill="#f4f2e4"/><rect x="1.5" y="1.5" width="10" height="10" fill="#e8ebf8"/><path d="M11.5 1V12.5H1.5" fill="none" stroke="#5a6ad0" stroke-width="1.6"/><path d="M3 6.5H10" stroke="#4a5ac8" stroke-width="1.6"/></svg>
<div class="a" style="left:1225px;top:209px;height:36px;line-height:36px;font-size:15px;white-space:nowrap;font-family:'Liberation Mono',monospace;transform:scaleY(1.18);transform-origin:0 50%;-webkit-text-stroke:0.3px #000;">Inputs/Outputs Connection 1</div>
<svg class="a" style="left:1189px;top:249px" width="14" height="14"><rect x="0.5" y="0.5" width="12" height="12" fill="#f4f2e4"/><rect x="1.5" y="1.5" width="10" height="10" fill="#e8ebf8"/><path d="M11.5 1V12.5H1.5" fill="none" stroke="#5a6ad0" stroke-width="1.6"/><path d="M3 6.5H10" stroke="#4a5ac8" stroke-width="1.6"/><path d="M6.5 3V10" stroke="#4a5ac8" stroke-width="1.6"/></svg>
<div class="a" style="left:1234px;top:245px;height:36px;line-height:36px;font-size:15px;white-space:nowrap;font-family:'Liberation Mono',monospace;transform:scaleY(1.18);transform-origin:0 50%;-webkit-text-stroke:0.3px #000;">EIP_MainDeviceInput</div>
<div class="a t" style="left:1463px;top:243px;height:34px;line-height:34px;font-size:22px;color:#e8141e"><span class="c"><i>接</i></span><span class="c"><i>收</i></span></div>
<div class="a" style="left:1545px;top:248px;width:57px;height:27px;border:1px solid #9fbad8;background:linear-gradient(#f8f8f8,#e8e8e8)"></div>
<div class="a" style="left:1545px;top:248px;width:57px;height:27px;line-height:27px;text-align:center;font-size:14px;font-family:'Liberation Mono',monospace;transform:scaleY(1.18);transform-origin:0 50%;-webkit-text-stroke:0.3px #000;">...</div>
<div class="a" style="left:1639px;top:245px;height:36px;line-height:36px;font-size:15px;white-space:nowrap;font-family:'Liberation Mono',monospace;transform:scaleY(1.18);transform-origin:0 50%;-webkit-text-stroke:0.3px #000;">Conn1_Input_Size0</div>
<div class="a" style="left:1939px;top:245px;height:36px;line-height:36px;font-size:15px;white-space:nowrap;font-family:'Liberation Mono',monospace;transform:scaleY(1.18);transform-origin:0 50%;-webkit-text-stroke:0.3px #000;">INT[200]</div>
<div class="a" style="left:1155px;top:279px;width:1090px;height:36px;background:#f3f3f3"></div>
<svg class="a" style="left:1189px;top:285px" width="14" height="14"><rect x="0.5" y="0.5" width="12" height="12" fill="#f4f2e4"/><rect x="1.5" y="1.5" width="10" height="10" fill="#e8ebf8"/><path d="M11.5 1V12.5H1.5" fill="none" stroke="#5a6ad0" stroke-width="1.6"/><path d="M3 6.5H10" stroke="#4a5ac8" stroke-width="1.6"/><path d="M6.5 3V10" stroke="#4a5ac8" stroke-width="1.6"/></svg>
<div class="a" style="left:1234px;top:281px;height:36px;line-height:36px;font-size:15px;white-space:nowrap;font-family:'Liberation Mono',monospace;transform:scaleY(1.18);transform-origin:0 50%;-webkit-text-stroke:0.3px #000;">EIP_DeviceSignal</div>
<div class="a t" style="left:1463px;top:279px;height:34px;line-height:34px;font-size:22px;color:#e8141e"><span class="c"><i>发</i></span><span class="c"><i>送</i></span></div>
<div class="a" style="left:1545px;top:284px;width:57px;height:27px;border:1px solid #9fbad8;background:linear-gradient(#f8f8f8,#e8e8e8)"></div>
<div class="a" style="left:1545px;top:284px;width:57px;height:27px;line-height:27px;text-align:center;font-size:14px;font-family:'Liberation Mono',monospace;transform:scaleY(1.18);transform-origin:0 50%;-webkit-text-stroke:0.3px #000;">...</div>
<div class="a" style="left:1639px;top:281px;height:36px;line-height:36px;font-size:15px;white-space:nowrap;font-family:'Liberation Mono',monospace;transform:scaleY(1.18);transform-origin:0 50%;-webkit-text-stroke:0.3px #000;">Conn1_Output_Size0</div>
<div class="a" style="left:1939px;top:281px;height:36px;line-height:36px;font-size:15px;white-space:nowrap;font-family:'Liberation Mono',monospace;transform:scaleY(1.18);transform-origin:0 50%;-webkit-text-stroke:0.3px #000;">INT</div>
<svg class="a" style="left:1189px;top:321px" width="14" height="14"><rect x="0.5" y="0.5" width="12" height="12" fill="#f4f2e4"/><rect x="1.5" y="1.5" width="10" height="10" fill="#e8ebf8"/><path d="M11.5 1V12.5H1.5" fill="none" stroke="#5a6ad0" stroke-width="1.6"/><path d="M3 6.5H10" stroke="#4a5ac8" stroke-width="1.6"/><path d="M6.5 3V10" stroke="#4a5ac8" stroke-width="1.6"/></svg>
<div class="a" style="left:1234px;top:317px;height:36px;line-height:36px;font-size:15px;white-space:nowrap;font-family:'Liberation Mono',monospace;transform:scaleY(1.18);transform-origin:0 50%;-webkit-text-stroke:0.3px #000;">EIP_DeviceState</div>
<div class="a t" style="left:1463px;top:315px;height:34px;line-height:34px;font-size:22px;color:#e8141e"><span class="c"><i>发</i></span><span class="c"><i>送</i></span></div>
<div class="a" style="left:1545px;top:320px;width:57px;height:27px;border:1px solid #9fbad8;background:linear-gradient(#f8f8f8,#e8e8e8)"></div>
<div class="a" style="left:1545px;top:320px;width:57px;height:27px;line-height:27px;text-align:center;font-size:14px;font-family:'Liberation Mono',monospace;transform:scaleY(1.18);transform-origin:0 50%;-webkit-text-stroke:0.3px #000;">...</div>
<div class="a" style="left:1639px;top:317px;height:36px;line-height:36px;font-size:15px;white-space:nowrap;font-family:'Liberation Mono',monospace;transform:scaleY(1.18);transform-origin:0 50%;-webkit-text-stroke:0.3px #000;">Conn1_Output_Size1</div>
<div class="a" style="left:1939px;top:317px;height:36px;line-height:36px;font-size:15px;white-space:nowrap;font-family:'Liberation Mono',monospace;transform:scaleY(1.18);transform-origin:0 50%;-webkit-text-stroke:0.3px #000;">INT[2]</div>
<div class="a" style="left:1155px;top:351px;width:1090px;height:36px;background:#f3f3f3"></div>
<svg class="a" style="left:1189px;top:357px" width="14" height="14"><rect x="0.5" y="0.5" width="12" height="12" fill="#f4f2e4"/><rect x="1.5" y="1.5" width="10" height="10" fill="#e8ebf8"/><path d="M11.5 1V12.5H1.5" fill="none" stroke="#5a6ad0" stroke-width="1.6"/><path d="M3 6.5H10" stroke="#4a5ac8" stroke-width="1.6"/><path d="M6.5 3V10" stroke="#4a5ac8" stroke-width="1.6"/></svg>
<div class="a" style="left:1234px;top:353px;height:36px;line-height:36px;font-size:15px;white-space:nowrap;font-family:'Liberation Mono',monospace;transform:scaleY(1.18);transform-origin:0 50%;-webkit-text-stroke:0.3px #000;">EIP_MainDeviceOutput</div>
<div class="a t" style="left:1463px;top:351px;height:34px;line-height:34px;font-size:22px;color:#e8141e"><span class="c"><i>发</i></span><span class="c"><i>送</i></span></div>
<div class="a" style="left:1545px;top:356px;width:57px;height:27px;border:1px solid #9fbad8;background:linear-gradient(#f8f8f8,#e8e8e8)"></div>
<div class="a" style="left:1545px;top:356px;width:57px;height:27px;line-height:27px;text-align:center;font-size:14px;font-family:'Liberation Mono',monospace;transform:scaleY(1.18);transform-origin:0 50%;-webkit-text-stroke:0.3px #000;">...</div>
<div class="a" style="left:1639px;top:353px;height:36px;line-height:36px;font-size:15px;white-space:nowrap;font-family:'Liberation Mono',monospace;transform:scaleY(1.18);transform-origin:0 50%;-webkit-text-stroke:0.3px #000;">Conn1_Output_Size2</div>
<div class="a" style="left:1939px;top:353px;height:36px;line-height:36px;font-size:15px;white-space:nowrap;font-family:'Liberation Mono',monospace;transform:scaleY(1.18);transform-origin:0 50%;-webkit-text-stroke:0.3px #000;">INT[200]</div>
<div class="a" style="left:836px;top:1255px;width:1570px;height:1px;background:#e4e4e4"></div>
<svg class="a" style="left:826px;top:1256px" width="1580" height="50">
<path d="M3 4.5H32L68 40.5Q70 41 75 41H158Q163 41 163 36" fill="none" stroke="#222" stroke-width="1.7"/>
<path d="M129 4.5L163 36Q167 41 172 41H303Q308 41 309 36V4.5" fill="#fdfdfd" stroke="#222" stroke-width="1.7"/>
<path d="M129 4.5H32" stroke="#222" stroke-width="2"/>
<path d="M309 4.5H1580" stroke="#333" stroke-width="2"/>
<rect x="4.5" y="14.5" width="22" height="22" fill="#f0f0f0" stroke="#fff"/><path d="M26.5 14.5V36.5H4.5" fill="none" stroke="#888" stroke-width="1.2"/><path d="M20 18L12 25.5L20 33Z" fill="none" stroke="#111" stroke-width="1.3"/>
<rect x="72" y="12" width="19" height="22" fill="none" stroke="#666" stroke-width="1.6"/><path d="M75 16H88M75 19H88M75 22H84" stroke="#1a8ad4" stroke-width="1.6"/><text x="94" y="35" font-size="11" font-family="Liberation Sans" fill="#1a8ad4" text-anchor="middle">M</text>
<rect x="164" y="12" width="9" height="23" fill="#666"/><path d="M167 15V33M170 18V33" stroke="#ddd" stroke-width="1"/><circle cx="182" cy="15" r="3" fill="none" stroke="#1a8ad4" stroke-width="1.8"/><rect x="176" y="21" width="11" height="13" fill="none" stroke="#666" stroke-width="1.8"/><circle cx="181.5" cy="27.5" r="3" fill="none" stroke="#888" stroke-width="1.5"/>
</svg>
<div class="a t" style="left:924px;top:1263px;height:30px;line-height:30px;">MAIN</div>
<div class="a" style="left:1022px;top:1263px;height:30px;line-height:30px;font-size:20px;font-weight:bold;white-space:nowrap">EtherNet/IP</div>
<div class="a" style="left:468px;top:1299px;width:354px;height:1px;background:#a0a0a0"></div>
<div class="a" style="left:474px;top:1303px;width:180px;height:40px;border:1px solid #a8a8a8;border-bottom:none;background:#f0f0f0"></div>
<svg class="a" style="left:481px;top:1310px" width="22" height="22"><circle cx="10.5" cy="11" r="9.5" fill="#2a96d8"/><path d="M7 6 Q5 10 9 12 L13 17" fill="none" stroke="#fff" stroke-width="2.2"/></svg>
<div class="a t" style="left:517px;top:1305px;height:30px;line-height:30px;"><span class="c"><i>信</i></span><span class="c"><i>息</i></span><span class="c"><i>输</i></span><span class="c"><i>出</i></span><span class="c"><i>窗</i></span><span class="c"><i>口</i></span></div>
<div class="a" style="left:2234px;top:1340px;width:44px;height:3px;border:1px solid #a0a0a0;border-bottom:none"></div>
<div class="a" style="left:2282px;top:1340px;width:124px;height:3px;border:1px solid #a0a0a0;border-bottom:none;border-right:none"></div></body></html>
